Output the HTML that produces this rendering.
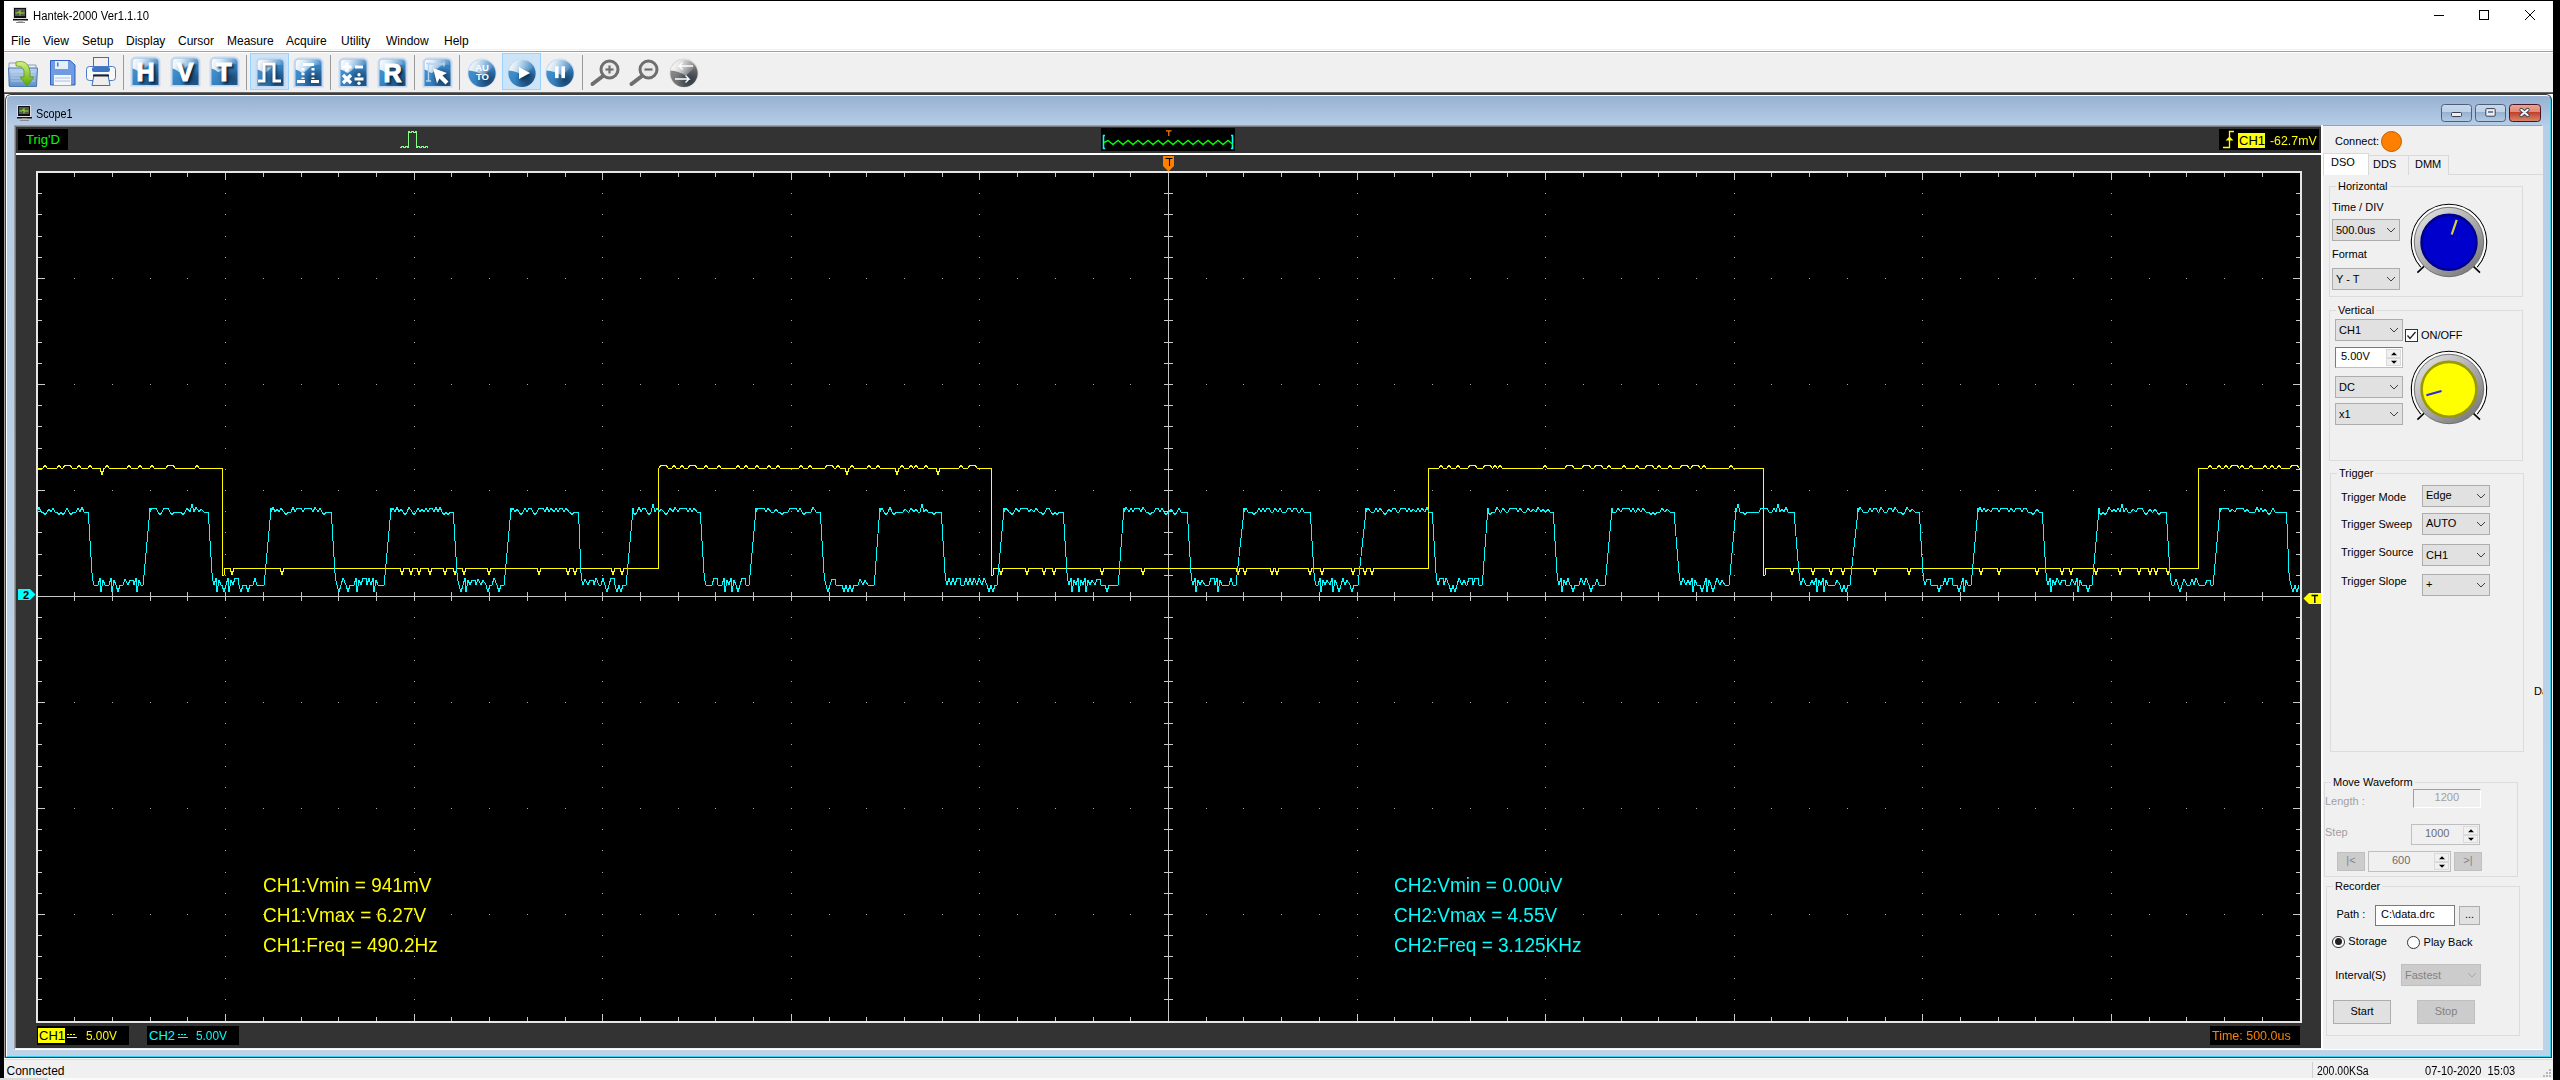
<!DOCTYPE html>
<html><head><meta charset="utf-8">
<style>
*{box-sizing:border-box}
html,body{margin:0;padding:0;width:2560px;height:1080px;overflow:hidden;background:#000;font-family:"Liberation Sans",sans-serif;}
.a{position:absolute}
.t{position:absolute;white-space:pre;line-height:1}
</style></head><body>
<!-- app frame -->
<div class="a" style="left:4px;top:1px;width:2549px;height:1079px;background:#fff"></div>
<!-- menu bar -->
<div class="a" style="left:4px;top:49px;width:2549px;height:1px;background:#f0f0f0"></div>
<div class="a" style="left:4px;top:51px;width:2549px;height:1px;background:#a0a0a0"></div>
<!-- toolbar -->
<div class="a" style="left:4px;top:53px;width:2549px;height:39px;background:#f0f0f0"></div>
<div class="a" style="left:4px;top:92px;width:2549px;height:1px;background:#6a6a6a"></div>
<div class="a" style="left:4px;top:93px;width:2549px;height:1px;background:#3c3c3c"></div>
<!-- MDI child window frame -->
<div class="a" style="left:4px;top:94px;width:1px;height:964px;background:#a0a0a0"></div>
<div class="a" style="left:5px;top:94px;width:2547px;height:964px;background:#3c3c3c;border-radius:6px 6px 0 0"></div>
<div class="a" style="left:6px;top:95px;width:2545px;height:962px;background:linear-gradient(#97b1d2,#b7cee8 30px,#bcd3ea);border-radius:5px 5px 0 0;border-left:1px solid #fff;border-top:1px solid #fff;border-right:1px solid #3ad0f0;border-bottom:1px solid #3ad0f0"></div>
<div class="a" style="left:14px;top:125px;width:2529px;height:925px;background:#f0f0f0;border-left:1px solid #a0a0a0;border-top:1px solid #a0a0a0;border-right:1px solid #fff;border-bottom:1px solid #fff"></div>
<!-- child title -->
<svg class="a" style="left:16px;top:104px" width="17" height="18">
<rect x="1.5" y="1.5" width="13" height="11" fill="#111" stroke="#ddd" stroke-width="1"/>
<rect x="3" y="3" width="10" height="7" fill="#555"/>
<path d="M3.5 7H6L7 5.5L8 7H12.5M8 4V9.5" stroke="#8fe030" stroke-width="1" fill="none"/>
<rect x="1" y="13" width="15" height="1.5" fill="#111"/>
<rect x="6" y="14.5" width="5" height="1.5" fill="#bbb"/>
<rect x="4" y="16" width="9" height="1" fill="#888"/>
</svg>
<div class="t" style="left:36px;top:108px;font-size:12px;color:#000;transform:scaleX(0.9);transform-origin:0 0">Scope1</div>
<svg class="a" style="left:2440px;top:103px" width="102" height="20">
<defs>
<linearGradient id="cbB" x1="0" y1="0" x2="0" y2="1"><stop offset="0" stop-color="#c9d9ec"/><stop offset="0.45" stop-color="#bcd0e8"/><stop offset="0.46" stop-color="#97b1d0"/><stop offset="1" stop-color="#b5cbe5"/></linearGradient>
<linearGradient id="cbR" x1="0" y1="0" x2="0" y2="1"><stop offset="0" stop-color="#eaa594"/><stop offset="0.45" stop-color="#df8a76"/><stop offset="0.46" stop-color="#c0402a"/><stop offset="1" stop-color="#d88a70"/></linearGradient>
</defs>
<rect x="1.5" y="1.5" width="30" height="17" rx="3" fill="url(#cbB)" stroke="#4f5f78" stroke-width="1"/>
<rect x="35.5" y="1.5" width="30" height="17" rx="3" fill="url(#cbB)" stroke="#4f5f78" stroke-width="1"/>
<rect x="69.5" y="1.5" width="31" height="17" rx="3" fill="url(#cbR)" stroke="#4a1424" stroke-width="1"/>
<rect x="11.5" y="9.5" width="10" height="4" rx="1" fill="#eee" stroke="#3a3f50" stroke-width="1"/>
<rect x="45.8" y="5.6" width="9.4" height="7.6" rx="1" fill="#eee" stroke="#3a3f50" stroke-width="1"/>
<rect x="48" y="8" width="5" height="2" fill="#6f86a8"/>
<path d="M81.3 6.8L87.7 12.2M87.7 6.8L81.3 12.2" stroke="#3a3f50" stroke-width="3.8" stroke-linecap="round"/>
<path d="M81.3 6.8L87.7 12.2M87.7 6.8L81.3 12.2" stroke="#f4f4f4" stroke-width="2.1" stroke-linecap="round"/>
</svg>
<!-- scope client dark -->
<div class="a" style="left:15px;top:126px;width:2306px;height:922px;background:#333"></div>
<div class="a" style="left:15px;top:126px;width:2306px;height:1px;background:#777"></div>
<div class="a" style="left:15px;top:126px;width:1px;height:922px;background:#777"></div>
<!-- right panel -->
<div class="a" style="left:2321px;top:125px;width:2px;height:924px;background:#fff"></div>
<div class="a" style="left:2323px;top:126px;width:220px;height:923px;background:#f0f0f0"></div>
<div class="t" style="left:2335px;top:135.7px;font-size:11px;color:#000;">Connect:</div>
<div class="a" style="left:2381px;top:131px;width:21px;height:21px;border-radius:50%;background:#ff8000;border:1px solid #b85c00"></div>
<div class="a" style="left:2323px;top:174px;width:220px;height:1px;background:#d9d9d9"></div>
<div class="a" style="left:2368px;top:155px;width:41px;height:20px;background:#f0f0f0;border:1px solid #d9d9d9;border-bottom:none"></div>
<div class="a" style="left:2408px;top:155px;width:41px;height:20px;background:#f0f0f0;border:1px solid #d9d9d9;border-bottom:none"></div>
<div class="a" style="left:2323px;top:153px;width:46px;height:22px;background:#fff;border:1px solid #d9d9d9;border-bottom:none"></div>
<div class="t" style="left:2331px;top:157.4px;font-size:11px;color:#000;">DSO</div>
<div class="t" style="left:2373px;top:159.4px;font-size:11px;color:#000;">DDS</div>
<div class="t" style="left:2415px;top:159.4px;font-size:11px;color:#000;">DMM</div>
<div class="a" style="left:2329px;top:186px;width:194px;height:111px;border:1px solid #dcdcdc"></div><div class="t" style="left:2336px;top:180.7px;font-size:11px;color:#000;background:#f0f0f0;padding:0 2px">Horizontal</div>
<div class="t" style="left:2332px;top:201.6px;font-size:11px;color:#000;">Time / DIV</div>
<div class="a" style="left:2332px;top:219px;width:68px;height:22px;background:#e1e1e1;border:1px solid #adadad"></div><div class="t" style="left:2336px;top:224.7px;font-size:11px;color:#000;">500.0us</div><svg class="a" style="left:2386px;top:227.0px" width="10" height="6"><path d="M1 1L5 5L9 1" fill="none" stroke="#404040" stroke-width="1"/></svg>
<div class="t" style="left:2332px;top:248.5px;font-size:11px;color:#000;">Format</div>
<div class="a" style="left:2332px;top:268px;width:68px;height:22px;background:#e1e1e1;border:1px solid #adadad"></div><div class="t" style="left:2336px;top:273.7px;font-size:11px;color:#000;">Y - T</div><svg class="a" style="left:2386px;top:276.0px" width="10" height="6"><path d="M1 1L5 5L9 1" fill="none" stroke="#404040" stroke-width="1"/></svg>
<svg class="a" style="left:2409px;top:202px" width="80" height="80"><defs><linearGradient id="kg242" x1="0.15" y1="0.1" x2="0.85" y2="0.9"><stop offset="0" stop-color="#dcdcdc"/><stop offset="1" stop-color="#7c7c7c"/></linearGradient></defs><path d="M11.81 65.03A37.7 37.7 0 1 1 68.19 65.03" fill="none" stroke="#000" stroke-width="1.1"/><path d="M12.85 64.10A36.3 36.3 0 1 1 67.15 64.10" fill="none" stroke="#fff" stroke-width="1.4"/><path d="M8.4 70.6L15.0 64.4M71.0 70.6L64.4 64.4" stroke="#000" stroke-width="1.6"/><circle cx="40" cy="40" r="34.7" fill="url(#kg242)" stroke="#666" stroke-width="0.9"/><circle cx="40" cy="40.3" r="27.4" fill="#0000cc" stroke="#00008c" stroke-width="2.6"/><path d="M47.7 17.8L42.7 32.5" stroke="#d8d040" stroke-width="2.2"/></svg>
<div class="a" style="left:2329px;top:310px;width:194px;height:151px;border:1px solid #dcdcdc"></div><div class="t" style="left:2336px;top:304.7px;font-size:11px;color:#000;background:#f0f0f0;padding:0 2px">Vertical</div>
<div class="a" style="left:2335px;top:319px;width:68px;height:22px;background:#e1e1e1;border:1px solid #adadad"></div><div class="t" style="left:2339px;top:324.6px;font-size:11px;color:#000;">CH1</div><svg class="a" style="left:2389px;top:327.0px" width="10" height="6"><path d="M1 1L5 5L9 1" fill="none" stroke="#404040" stroke-width="1"/></svg>
<div class="a" style="left:2405px;top:329px;width:13px;height:13px;background:#fff;border:1px solid #333"></div>
<svg class="a" style="left:2405px;top:329px" width="13" height="13"><path d="M2.5 6.5L5 9.5L10.5 3" fill="none" stroke="#222" stroke-width="1.3"/></svg>
<div class="t" style="left:2421px;top:330.3px;font-size:11px;color:#000;">ON/OFF</div>
<div class="a" style="left:2335px;top:347px;width:68px;height:21px;background:#fff;border:1px solid #7a7a7a;border-right-color:#bfbfbf;border-bottom-color:#bfbfbf"></div><div class="t" style="left:2341px;top:351.3px;font-size:11px;color:#000;">5.00V</div><div class="a" style="left:2386px;top:349px;width:15px;height:8.5px;background:#f0f0f0;border:1px solid #dadada"></div><div class="a" style="left:2386px;top:357.5px;width:15px;height:8.5px;background:#f0f0f0;border:1px solid #dadada"></div><svg class="a" style="left:2389.5px;top:349px" width="8" height="17"><path d="M1 6.2L4 3.2L7 6.2z M1 11.8L4 14.8L7 11.8z" fill="#000"/></svg>
<div class="a" style="left:2335px;top:376px;width:68px;height:22px;background:#e1e1e1;border:1px solid #adadad"></div><div class="t" style="left:2339px;top:381.7px;font-size:11px;color:#000;">DC</div><svg class="a" style="left:2389px;top:384.0px" width="10" height="6"><path d="M1 1L5 5L9 1" fill="none" stroke="#404040" stroke-width="1"/></svg>
<div class="a" style="left:2335px;top:403px;width:68px;height:22px;background:#e1e1e1;border:1px solid #adadad"></div><div class="t" style="left:2339px;top:408.7px;font-size:11px;color:#000;">x1</div><svg class="a" style="left:2389px;top:411.0px" width="10" height="6"><path d="M1 1L5 5L9 1" fill="none" stroke="#404040" stroke-width="1"/></svg>
<svg class="a" style="left:2409px;top:349px" width="80" height="80"><defs><linearGradient id="kg389" x1="0.15" y1="0.1" x2="0.85" y2="0.9"><stop offset="0" stop-color="#dcdcdc"/><stop offset="1" stop-color="#7c7c7c"/></linearGradient></defs><path d="M11.81 65.03A37.7 37.7 0 1 1 68.19 65.03" fill="none" stroke="#000" stroke-width="1.1"/><path d="M12.85 64.10A36.3 36.3 0 1 1 67.15 64.10" fill="none" stroke="#fff" stroke-width="1.4"/><path d="M8.4 70.6L15.0 64.4M71.0 70.6L64.4 64.4" stroke="#000" stroke-width="1.6"/><circle cx="40" cy="40" r="34.7" fill="url(#kg389)" stroke="#666" stroke-width="0.9"/><circle cx="40" cy="40.3" r="27.4" fill="#ffff00" stroke="#9a9a00" stroke-width="2.6"/><path d="M17.4 46.2L32.5 42.0" stroke="#2a2ae0" stroke-width="2.2"/></svg>
<div class="a" style="left:2330px;top:473px;width:194px;height:279px;border:1px solid #dcdcdc"></div><div class="t" style="left:2337px;top:467.6px;font-size:11px;color:#000;background:#f0f0f0;padding:0 2px">Trigger</div>
<div class="t" style="left:2341px;top:491.6px;font-size:11px;color:#000;">Trigger Mode</div>
<div class="a" style="left:2422px;top:485px;width:68px;height:22px;background:#e1e1e1;border:1px solid #adadad"></div><div class="t" style="left:2426px;top:490.3px;font-size:11px;color:#000;">Edge</div><svg class="a" style="left:2476px;top:493.0px" width="10" height="6"><path d="M1 1L5 5L9 1" fill="none" stroke="#404040" stroke-width="1"/></svg>
<div class="t" style="left:2341px;top:519.4px;font-size:11px;color:#000;">Trigger Sweep</div>
<div class="a" style="left:2422px;top:513px;width:68px;height:22px;background:#e1e1e1;border:1px solid #adadad"></div><div class="t" style="left:2426px;top:518.1px;font-size:11px;color:#000;">AUTO</div><svg class="a" style="left:2476px;top:521.0px" width="10" height="6"><path d="M1 1L5 5L9 1" fill="none" stroke="#404040" stroke-width="1"/></svg>
<div class="t" style="left:2341px;top:547.3px;font-size:11px;color:#000;">Trigger Source</div>
<div class="a" style="left:2422px;top:544px;width:68px;height:22px;background:#e1e1e1;border:1px solid #adadad"></div><div class="t" style="left:2426px;top:549.9px;font-size:11px;color:#000;">CH1</div><svg class="a" style="left:2476px;top:552.0px" width="10" height="6"><path d="M1 1L5 5L9 1" fill="none" stroke="#404040" stroke-width="1"/></svg>
<div class="t" style="left:2341px;top:575.9px;font-size:11px;color:#000;">Trigger Slope</div>
<div class="a" style="left:2422px;top:574px;width:68px;height:22px;background:#e1e1e1;border:1px solid #adadad"></div><div class="t" style="left:2426px;top:579.1px;font-size:11px;color:#000;">+</div><svg class="a" style="left:2476px;top:582.0px" width="10" height="6"><path d="M1 1L5 5L9 1" fill="none" stroke="#404040" stroke-width="1"/></svg>
<div class="a" style="left:2530px;top:680px;width:13px;height:20px;overflow:hidden"><div class="t" style="left:4px;top:5.5px;font-size:11px;color:#000;">Da</div></div>
<div class="a" style="left:2324px;top:782px;width:194px;height:95px;border:1px solid #dcdcdc"></div><div class="t" style="left:2331px;top:776.5px;font-size:11px;color:#000;background:#f0f0f0;padding:0 2px">Move Waveform</div>
<div class="t" style="left:2325px;top:796.3px;font-size:11px;color:#a0a0a0;">Length :</div>
<div class="a" style="left:2413px;top:789px;width:68px;height:19px;background:#f0f0f0;border:1px solid #a0a0a0;border-right-color:#fff;border-bottom-color:#fff"></div>
<div class="t" style="left:2434.6px;top:792.3px;font-size:11px;color:#a0a0a0;">1200</div>
<div class="t" style="left:2325px;top:827.1px;font-size:11px;color:#a0a0a0;">Step</div>
<div class="a" style="left:2411px;top:824px;width:69px;height:21px;background:#f0f0f0;border:1px solid #bfbfbf;border-right-color:#bfbfbf;border-bottom-color:#bfbfbf"></div><div class="t" style="left:2425px;top:827.9px;font-size:11px;color:#6d6d6d;">1000</div><div class="a" style="left:2463px;top:826px;width:15px;height:8.5px;background:#f0f0f0;border:1px solid #dadada"></div><div class="a" style="left:2463px;top:834.5px;width:15px;height:8.5px;background:#f0f0f0;border:1px solid #dadada"></div><svg class="a" style="left:2466.5px;top:826px" width="8" height="17"><path d="M1 6.2L4 3.2L7 6.2z M1 11.8L4 14.8L7 11.8z" fill="#000"/></svg>
<div class="a" style="left:2337px;top:852px;width:28px;height:19px;background:#cccccc;border:1px solid #bfbfbf"></div><div class="t" style="left:2337px;top:854.9px;width:28px;text-align:center;font-size:11px;color:#838383">|&lt;</div>
<div class="a" style="left:2368px;top:851px;width:83px;height:21px;background:#f0f0f0;border:1px solid #bfbfbf;border-right-color:#bfbfbf;border-bottom-color:#bfbfbf"></div><div class="t" style="left:2392px;top:854.9px;font-size:11px;color:#6d6d6d;">600</div><div class="a" style="left:2434px;top:853px;width:15px;height:8.5px;background:#f0f0f0;border:1px solid #dadada"></div><div class="a" style="left:2434px;top:861.5px;width:15px;height:8.5px;background:#f0f0f0;border:1px solid #dadada"></div><svg class="a" style="left:2437.5px;top:853px" width="8" height="17"><path d="M1 6.2L4 3.2L7 6.2z M1 11.8L4 14.8L7 11.8z" fill="#000"/></svg>
<div class="a" style="left:2454px;top:852px;width:28px;height:19px;background:#cccccc;border:1px solid #bfbfbf"></div><div class="t" style="left:2454px;top:854.9px;width:28px;text-align:center;font-size:11px;color:#838383">&gt;|</div>
<div class="a" style="left:2326px;top:886px;width:194px;height:150px;border:1px solid #dcdcdc"></div><div class="t" style="left:2333px;top:880.5px;font-size:11px;color:#000;background:#f0f0f0;padding:0 2px">Recorder</div>
<div class="t" style="left:2336.5px;top:908.5px;font-size:11px;color:#000;">Path :</div>
<div class="a" style="left:2375px;top:905px;width:80px;height:21px;background:#fff;border:1px solid #7a7a7a"></div>
<div class="t" style="left:2381px;top:909.2px;font-size:11px;color:#000;">C:\data.drc</div>
<div class="a" style="left:2459px;top:906px;width:21px;height:19px;background:#e1e1e1;border:1px solid #adadad"></div><div class="t" style="left:2459px;top:909.2px;width:21px;text-align:center;font-size:11px;color:#000">...</div>
<div class="a" style="left:2332px;top:935.5px;width:12.5px;height:12.5px;border-radius:50%;background:#fff;border:1px solid #333"></div>
<div class="a" style="left:2334.7px;top:938.3px;width:7px;height:7px;border-radius:50%;background:#222"></div>
<div class="t" style="left:2348.3px;top:936.3px;font-size:11px;color:#000;">Storage</div>
<div class="a" style="left:2406.8px;top:936.3px;width:12.8px;height:12.8px;border-radius:50%;background:#fff;border:1px solid #333"></div>
<div class="t" style="left:2423.6px;top:937.2px;font-size:11px;color:#000;">Play Back</div>
<div class="t" style="left:2335.3px;top:969.6px;font-size:11px;color:#000;">Interval(S)</div>
<div class="a" style="left:2401px;top:964px;width:80px;height:22px;background:#cccccc;border:1px solid #bfbfbf"></div><div class="t" style="left:2405px;top:969.7px;font-size:11px;color:#838383;">Fastest</div><svg class="a" style="left:2467px;top:972.0px" width="10" height="6"><path d="M1 1L5 5L9 1" fill="none" stroke="#a8a8a8" stroke-width="1"/></svg>
<div class="a" style="left:2333px;top:1000px;width:58px;height:24px;background:#e1e1e1;border:1px solid #adadad"></div><div class="t" style="left:2333px;top:1006.3px;width:58px;text-align:center;font-size:11px;color:#000">Start</div>
<div class="a" style="left:2417px;top:1000px;width:58px;height:24px;background:#cccccc;border:1px solid #bfbfbf"></div><div class="t" style="left:2417px;top:1006.3px;width:58px;text-align:center;font-size:11px;color:#838383">Stop</div>
<!-- status bar -->
<div class="a" style="left:4px;top:1058px;width:2549px;height:22px;background:#f0f0f0;border-top:1px solid #fff"></div>
<div class="a" style="left:4px;top:1059px;width:2549px;height:1px;background:#dcdcdc"></div>
<div class="a" style="left:0px;top:1078px;width:48px;height:2px;background:#dadada"></div>
<div class="a" style="left:48px;top:1078px;width:2505px;height:2px;background:#fbfbfb"></div>
<div class="t" style="left:6.5px;top:1064.5px;font-size:12px;color:#000">Connected</div>
<div class="a" style="left:2312px;top:1062px;width:1px;height:16px;background:#d0d0d0"></div>
<div class="t" style="left:2317px;top:1064.5px;font-size:12px;color:#000;transform:scaleX(0.87);transform-origin:0 0">200.00KSa</div>
<div class="t" style="left:2425px;top:1064.5px;font-size:12px;color:#000;transform:scaleX(0.92);transform-origin:0 0">07-10-2020  15:03</div>
<svg class="a" style="left:2541px;top:1068px" width="12" height="12" shape-rendering="crispEdges"><path d="M8 1h2v2h-2zM5 4h2v2h-2zM8 4h2v2h-2zM2 7h2v2h-2zM5 7h2v2h-2zM8 7h2v2h-2z" fill="#b8b8b8"/></svg>

<!-- title icon -->
<svg class="a" style="left:12px;top:6px" width="17" height="18">
<rect x="1.5" y="1.5" width="13" height="11" fill="#111" stroke="#ddd" stroke-width="1"/>
<rect x="3" y="3" width="10" height="7" fill="#555"/>
<path d="M3.5 7H6L7 5.5L8 7H12.5M8 4V9.5" stroke="#8fe030" stroke-width="1" fill="none"/>
<rect x="1" y="13" width="15" height="1.5" fill="#111"/>
<rect x="6" y="14.5" width="5" height="1.5" fill="#bbb"/>
<rect x="4" y="16" width="9" height="1" fill="#888"/>
</svg>
<div class="t" style="left:33px;top:10px;font-size:12px;color:#000;transform:scaleX(0.94);transform-origin:0 0">Hantek-2000 Ver1.1.10</div>
<!-- window controls -->
<div class="a" style="left:2434px;top:15px;width:10px;height:1px;background:#000"></div>
<div class="a" style="left:2479px;top:10px;width:10px;height:10px;border:1px solid #000"></div>
<svg class="a" style="left:2524px;top:9px" width="12" height="12"><path d="M1 1L11 11M11 1L1 11" stroke="#000" stroke-width="1"/></svg>
<!-- menu -->
<div class="t" style="left:11px;top:35px;font-size:12px;color:#000">File</div>
<div class="t" style="left:43px;top:35px;font-size:12px;color:#000">View</div>
<div class="t" style="left:82px;top:35px;font-size:12px;color:#000">Setup</div>
<div class="t" style="left:126px;top:35px;font-size:12px;color:#000">Display</div>
<div class="t" style="left:178px;top:35px;font-size:12px;color:#000">Cursor</div>
<div class="t" style="left:227px;top:35px;font-size:12px;color:#000">Measure</div>
<div class="t" style="left:286px;top:35px;font-size:12px;color:#000">Acquire</div>
<div class="t" style="left:341px;top:35px;font-size:12px;color:#000">Utility</div>
<div class="t" style="left:386px;top:35px;font-size:12px;color:#000">Window</div>
<div class="t" style="left:444px;top:35px;font-size:12px;color:#000">Help</div>
<svg class="a" style="left:0;top:52px" width="720" height="41"><defs>
<filter id="fsh" x="-30%" y="-30%" width="160%" height="160%"><feGaussianBlur stdDeviation="1.3"/></filter>
<linearGradient id="gBlue" x1="0" y1="0" x2="1" y2="1"><stop offset="0" stop-color="#4a9ad6"/><stop offset="0.6" stop-color="#3580bf"/><stop offset="1" stop-color="#1f5a8f"/></linearGradient>
<radialGradient id="gShade" cx="0.68" cy="0.72" r="0.45"><stop offset="0" stop-color="#051a33" stop-opacity="0.55"/><stop offset="1" stop-color="#051a33" stop-opacity="0"/></radialGradient>
<linearGradient id="gGray" x1="0" y1="0" x2="1" y2="1"><stop offset="0" stop-color="#9a9a9a"/><stop offset="0.6" stop-color="#6e6e6e"/><stop offset="1" stop-color="#4a4a4a"/></linearGradient>
<linearGradient id="gGloss" x1="0" y1="0" x2="1" y2="0.2"><stop offset="0" stop-color="#fff" stop-opacity="1"/><stop offset="0.35" stop-color="#fff" stop-opacity="0.8"/><stop offset="1" stop-color="#fff" stop-opacity="0.1"/></linearGradient>
<linearGradient id="gFolder" x1="0" y1="0" x2="0" y2="1"><stop offset="0" stop-color="#bcd4ee"/><stop offset="1" stop-color="#5d8fc8"/></linearGradient>
<linearGradient id="gArrow" x1="0" y1="0" x2="0" y2="1"><stop offset="0" stop-color="#d8f08a"/><stop offset="1" stop-color="#5aa800"/></linearGradient>
</defs><rect x="123" y="3" width="1" height="35" fill="#9a9a9a"/><rect x="246" y="3" width="1" height="35" fill="#9a9a9a"/><rect x="330" y="3" width="1" height="35" fill="#9a9a9a"/><rect x="414" y="3" width="1" height="35" fill="#9a9a9a"/><rect x="459" y="3" width="1" height="35" fill="#9a9a9a"/><rect x="582" y="3" width="1" height="35" fill="#9a9a9a"/><rect x="250.5" y="1.5" width="38" height="36" fill="#cce4f7" stroke="#99d1ff" stroke-width="1"/><rect x="502.5" y="1.5" width="38" height="36" fill="#cce4f7" stroke="#99d1ff" stroke-width="1"/><g transform="translate(8,7)"><path d="M1 4H11L13 6H28V27H1z" fill="#e8eef5" stroke="#8aa0b8" stroke-width="1"/><path d="M0.5 9H29.5L28.5 27.5H1.5z" fill="url(#gFolder)" stroke="#4a78b0" stroke-width="1"/><path d="M3 13H27M3 16H27M3 19H27M3 22H27" stroke="#dbe7f5" stroke-width="0.8" opacity="0.6"/><path d="M8 3Q20 0 22 12V18H26L19 27L12 18H16V12Q15 7 8 7z" fill="url(#gArrow)" stroke="#5a9a10" stroke-width="0.8"/></g><g transform="translate(50,8)"><path d="M0.5 0.5H20L25 5V25H0.5z" fill="#6f9ce0" stroke="#2f5fc0" stroke-width="1"/><rect x="5" y="1" width="13" height="8" fill="#e6eefa"/><rect x="7" y="2.5" width="1.5" height="4" fill="#4a78c0"/><rect x="4" y="15" width="17" height="10" fill="#f4f6fb"/><path d="M5 18H20M5 21H20" stroke="#a9c0e8" stroke-width="1"/></g><g transform="translate(86,5)"><rect x="7.5" y="0.5" width="15" height="10" fill="#f4f0ef" stroke="#3a6fc0" stroke-width="1"/><rect x="0.5" y="9.5" width="29" height="14" rx="3" fill="#f8f8f8" stroke="#4a7ac8" stroke-width="1"/><rect x="6" y="10" width="18" height="5" rx="2" fill="#3f74c4"/><path d="M6 28.5L8 18H22L24 28.5z" fill="#f0eded" stroke="#3a6fc0" stroke-width="1"/><rect x="7" y="17.5" width="16" height="2" fill="#222"/></g><g transform="translate(130,4)"><path d="M0.5 30.5V6A5.5 5.5 0 0 1 6 0.5H25A5.5 5.5 0 0 1 30.5 6V30.5z" fill="#c6d7ee"/><path d="M2.5 29V6.5A4 4 0 0 1 6.5 2.5H24.5A4 4 0 0 1 28.5 6.5V29z" fill="url(#gBlue)"/><path d="M2.5 29V6.5A4 4 0 0 1 6.5 2.5H24.5A4 4 0 0 1 28.5 6.5V29z" fill="url(#gShade)"/><path d="M2.5 12.5V6.5A4 4 0 0 1 6.5 2.5H24.5A4 4 0 0 1 28.5 6.5V8Q20 7 15 12Q11 16 9 16Q6 13 2.5 12.5z" fill="url(#gGloss)"/><text x="17.5" y="27" font-family="Liberation Sans" font-weight="bold" font-size="25" fill="#06223d" fill-opacity="0.85" stroke="#06223d" stroke-width="1.2" text-anchor="middle" filter="url(#fsh)">H</text><text x="15.5" y="25" font-family="Liberation Sans" font-weight="bold" font-size="25" fill="#fff" stroke="#fff" stroke-width="1.1" text-anchor="middle">H</text></g><g transform="translate(170,4)"><path d="M0.5 30.5V6A5.5 5.5 0 0 1 6 0.5H25A5.5 5.5 0 0 1 30.5 6V30.5z" fill="#c6d7ee"/><path d="M2.5 29V6.5A4 4 0 0 1 6.5 2.5H24.5A4 4 0 0 1 28.5 6.5V29z" fill="url(#gBlue)"/><path d="M2.5 29V6.5A4 4 0 0 1 6.5 2.5H24.5A4 4 0 0 1 28.5 6.5V29z" fill="url(#gShade)"/><path d="M2.5 12.5V6.5A4 4 0 0 1 6.5 2.5H24.5A4 4 0 0 1 28.5 6.5V8Q20 7 15 12Q11 16 9 16Q6 13 2.5 12.5z" fill="url(#gGloss)"/><text x="17" y="27" font-family="Liberation Sans" font-weight="bold" font-size="25" fill="#06223d" fill-opacity="0.85" stroke="#06223d" stroke-width="1.2" text-anchor="middle" filter="url(#fsh)">V</text><text x="15" y="25" font-family="Liberation Sans" font-weight="bold" font-size="25" fill="#fff" stroke="#fff" stroke-width="1.1" text-anchor="middle">V</text></g><g transform="translate(209,4)"><path d="M0.5 30.5V6A5.5 5.5 0 0 1 6 0.5H25A5.5 5.5 0 0 1 30.5 6V30.5z" fill="#c6d7ee"/><path d="M2.5 29V6.5A4 4 0 0 1 6.5 2.5H24.5A4 4 0 0 1 28.5 6.5V29z" fill="url(#gBlue)"/><path d="M2.5 29V6.5A4 4 0 0 1 6.5 2.5H24.5A4 4 0 0 1 28.5 6.5V29z" fill="url(#gShade)"/><path d="M2.5 12.5V6.5A4 4 0 0 1 6.5 2.5H24.5A4 4 0 0 1 28.5 6.5V8Q20 7 15 12Q11 16 9 16Q6 13 2.5 12.5z" fill="url(#gGloss)"/><text x="17" y="27" font-family="Liberation Sans" font-weight="bold" font-size="25" fill="#06223d" fill-opacity="0.85" stroke="#06223d" stroke-width="1.2" text-anchor="middle" filter="url(#fsh)">T</text><text x="15" y="25" font-family="Liberation Sans" font-weight="bold" font-size="25" fill="#fff" stroke="#fff" stroke-width="1.1" text-anchor="middle">T</text></g><g transform="translate(255,5)"><path d="M0.5 30.5V6A5.5 5.5 0 0 1 6 0.5H25A5.5 5.5 0 0 1 30.5 6V30.5z" fill="#c6d7ee"/><path d="M2.5 29V6.5A4 4 0 0 1 6.5 2.5H24.5A4 4 0 0 1 28.5 6.5V29z" fill="url(#gBlue)"/><path d="M2.5 29V6.5A4 4 0 0 1 6.5 2.5H24.5A4 4 0 0 1 28.5 6.5V29z" fill="url(#gShade)"/><path d="M2.5 12.5V6.5A4 4 0 0 1 6.5 2.5H24.5A4 4 0 0 1 28.5 6.5V8Q20 7 15 12Q11 16 9 16Q6 13 2.5 12.5z" fill="url(#gGloss)"/><path d="M4 25H10V8H20V25H27" fill="none" stroke="#06223d" stroke-opacity="0.7" stroke-width="3" filter="url(#fsh)"/><path d="M3 24H9V7H19V24H26" fill="none" stroke="#fff" stroke-width="3"/></g><g transform="translate(293,5)"><path d="M0.5 30.5V6A5.5 5.5 0 0 1 6 0.5H25A5.5 5.5 0 0 1 30.5 6V30.5z" fill="#c6d7ee"/><path d="M2.5 29V6.5A4 4 0 0 1 6.5 2.5H24.5A4 4 0 0 1 28.5 6.5V29z" fill="url(#gBlue)"/><path d="M2.5 29V6.5A4 4 0 0 1 6.5 2.5H24.5A4 4 0 0 1 28.5 6.5V29z" fill="url(#gShade)"/><path d="M2.5 12.5V6.5A4 4 0 0 1 6.5 2.5H24.5A4 4 0 0 1 28.5 6.5V8Q20 7 15 12Q11 16 9 16Q6 13 2.5 12.5z" fill="url(#gGloss)"/><path d="M4 24.5H12M18 24.5H26M10 7.5H21" stroke="#fff" stroke-width="3"/><path d="M10 11V22M20 11V22" stroke="#fff" stroke-width="3" stroke-dasharray="2.4 2.4"/></g><g transform="translate(338,5)"><path d="M0.5 30.5V6A5.5 5.5 0 0 1 6 0.5H25A5.5 5.5 0 0 1 30.5 6V30.5z" fill="#c6d7ee"/><path d="M2.5 29V6.5A4 4 0 0 1 6.5 2.5H24.5A4 4 0 0 1 28.5 6.5V29z" fill="url(#gBlue)"/><path d="M2.5 29V6.5A4 4 0 0 1 6.5 2.5H24.5A4 4 0 0 1 28.5 6.5V29z" fill="url(#gShade)"/><path d="M2.5 12.5V6.5A4 4 0 0 1 6.5 2.5H24.5A4 4 0 0 1 28.5 6.5V8Q20 7 15 12Q11 16 9 16Q6 13 2.5 12.5z" fill="url(#gGloss)"/><path d="M4.5 10H13.5M9 5.5V14.5M17 10H25M5 18L13 26M13 18L5 26M16.5 22H25.5" stroke="#fff" stroke-width="3.2"/><circle cx="21" cy="17.8" r="1.7" fill="#fff"/><circle cx="21" cy="26.2" r="1.7" fill="#fff"/></g><g transform="translate(377,5)"><path d="M0.5 30.5V6A5.5 5.5 0 0 1 6 0.5H25A5.5 5.5 0 0 1 30.5 6V30.5z" fill="#c6d7ee"/><path d="M2.5 29V6.5A4 4 0 0 1 6.5 2.5H24.5A4 4 0 0 1 28.5 6.5V29z" fill="url(#gBlue)"/><path d="M2.5 29V6.5A4 4 0 0 1 6.5 2.5H24.5A4 4 0 0 1 28.5 6.5V29z" fill="url(#gShade)"/><path d="M2.5 12.5V6.5A4 4 0 0 1 6.5 2.5H24.5A4 4 0 0 1 28.5 6.5V8Q20 7 15 12Q11 16 9 16Q6 13 2.5 12.5z" fill="url(#gGloss)"/><text x="17.5" y="27" font-family="Liberation Sans" font-weight="bold" font-size="25" fill="#06223d" fill-opacity="0.85" stroke="#06223d" stroke-width="1.2" text-anchor="middle" filter="url(#fsh)">R</text><text x="15.5" y="25" font-family="Liberation Sans" font-weight="bold" font-size="25" fill="#fff" stroke="#fff" stroke-width="1.1" text-anchor="middle">R</text></g><g transform="translate(422,5)"><path d="M0.5 30.5V6A5.5 5.5 0 0 1 6 0.5H25A5.5 5.5 0 0 1 30.5 6V30.5z" fill="#c6d7ee"/><path d="M2.5 29V6.5A4 4 0 0 1 6.5 2.5H24.5A4 4 0 0 1 28.5 6.5V29z" fill="url(#gBlue)"/><path d="M2.5 29V6.5A4 4 0 0 1 6.5 2.5H24.5A4 4 0 0 1 28.5 6.5V29z" fill="url(#gShade)"/><path d="M2.5 12.5V6.5A4 4 0 0 1 6.5 2.5H24.5A4 4 0 0 1 28.5 6.5V8Q20 7 15 12Q11 16 9 16Q6 13 2.5 12.5z" fill="url(#gGloss)"/><path d="M6.5 6V24M4 6.5H9M4 24H9M6.5 7H22M22 4.5V9.5" stroke="#b8d4ee" stroke-width="1.4" fill="none"/><path d="M11.5 11.5L26 16.5L21 19L27 25L24 28L18.5 22L15.5 27z" fill="#06223d" fill-opacity="0.5" filter="url(#fsh)"/><path d="M11 11L25 16L20.5 18.5L26.5 24.5L23.5 27.5L17.5 21.5L15 26.5z" fill="#fff"/></g><g transform="translate(467,6)"><circle cx="15" cy="15" r="14.5" fill="#c9d9ee"/><circle cx="15" cy="15.3" r="13.6" fill="url(#gBlue)"/><circle cx="15" cy="15.3" r="13.6" fill="url(#gShade)"/><path d="M1.6 12.5 A13.6 13.6 0 0 1 27 8.5 L17 17.5 Q9 13 1.6 12.5z" fill="url(#gGloss)"/><text x="15" y="12.8" font-family="Liberation Sans" font-weight="bold" font-size="9.5" fill="#fff" text-anchor="middle">AU</text><text x="15.5" y="22.2" font-family="Liberation Sans" font-weight="bold" font-size="9.5" fill="#fff" text-anchor="middle">TO</text></g><g transform="translate(507,6)"><circle cx="15" cy="15" r="14.5" fill="#c9d9ee"/><circle cx="15" cy="15.3" r="13.6" fill="url(#gBlue)"/><circle cx="15" cy="15.3" r="13.6" fill="url(#gShade)"/><path d="M1.6 12.5 A13.6 13.6 0 0 1 27 8.5 L17 17.5 Q9 13 1.6 12.5z" fill="url(#gGloss)"/><path d="M13.5 11L25 17L13.5 23z" fill="#06223d" fill-opacity="0.6" filter="url(#fsh)"/><path d="M12 9L23 15L12 21z" fill="#fff"/></g><g transform="translate(545,6)"><circle cx="15" cy="15" r="14.5" fill="#c9d9ee"/><circle cx="15" cy="15.3" r="13.6" fill="url(#gBlue)"/><circle cx="15" cy="15.3" r="13.6" fill="url(#gShade)"/><path d="M1.6 12.5 A13.6 13.6 0 0 1 27 8.5 L17 17.5 Q9 13 1.6 12.5z" fill="url(#gGloss)"/><rect x="10" y="8.3" width="3.6" height="11.8" fill="#fff"/><rect x="16.4" y="8.3" width="3.6" height="11.8" fill="#fff"/></g><g transform="translate(590,7)"><circle cx="19.5" cy="10.5" r="8.5" fill="#eaeaea" stroke="#6e6e6e" stroke-width="3"/><path d="M13 17L2.5 25" stroke="#6e6e6e" stroke-width="4" stroke-linecap="round"/><path d="M15.5 10.5H23.5" stroke="#6e6e6e" stroke-width="2.2"/><path d="M19.5 6.5V14.5" stroke="#6e6e6e" stroke-width="2.2"/></g><g transform="translate(629,7)"><circle cx="19.5" cy="10.5" r="8.5" fill="#eaeaea" stroke="#6e6e6e" stroke-width="3"/><path d="M13 17L2.5 25" stroke="#6e6e6e" stroke-width="4" stroke-linecap="round"/><path d="M15.5 10.5H23.5" stroke="#6e6e6e" stroke-width="2.2"/></g><g transform="translate(669,6)"><circle cx="15" cy="15" r="14.5" fill="#d6d6d6"/><circle cx="15" cy="15.3" r="13.6" fill="url(#gGray)"/><circle cx="15" cy="15.3" r="13.6" fill="url(#gShade)"/><path d="M1.6 12.5 A13.6 13.6 0 0 1 27 8.5 L17 17.5 Q9 13 1.6 12.5z" fill="url(#gGloss)"/><path d="M24 8H10L13.5 4.5M10 8L13.5 11.5M6 21H20L16.5 17.5M20 21L16.5 24.5" stroke="#fff" stroke-width="1.4" fill="none"/></g></svg>

<!-- plot -->
<svg class="a" style="left:0;top:0" width="2560" height="1080" shape-rendering="crispEdges">
<rect x="37" y="172" width="2264" height="850" fill="#000"/>
<path d="M74 278h1v1h-1zM112 278h1v1h-1zM150 278h1v1h-1zM187 278h1v1h-1zM225 278h1v1h-1zM263 278h1v1h-1zM301 278h1v1h-1zM338 278h1v1h-1zM376 278h1v1h-1zM414 278h1v1h-1zM451 278h1v1h-1zM489 278h1v1h-1zM527 278h1v1h-1zM565 278h1v1h-1zM602 278h1v1h-1zM640 278h1v1h-1zM678 278h1v1h-1zM715 278h1v1h-1zM753 278h1v1h-1zM791 278h1v1h-1zM829 278h1v1h-1zM866 278h1v1h-1zM904 278h1v1h-1zM942 278h1v1h-1zM979 278h1v1h-1zM1017 278h1v1h-1zM1055 278h1v1h-1zM1093 278h1v1h-1zM1130 278h1v1h-1zM1168 278h1v1h-1zM1206 278h1v1h-1zM1243 278h1v1h-1zM1281 278h1v1h-1zM1319 278h1v1h-1zM1357 278h1v1h-1zM1394 278h1v1h-1zM1432 278h1v1h-1zM1470 278h1v1h-1zM1507 278h1v1h-1zM1545 278h1v1h-1zM1583 278h1v1h-1zM1621 278h1v1h-1zM1658 278h1v1h-1zM1696 278h1v1h-1zM1734 278h1v1h-1zM1771 278h1v1h-1zM1809 278h1v1h-1zM1847 278h1v1h-1zM1885 278h1v1h-1zM1922 278h1v1h-1zM1960 278h1v1h-1zM1998 278h1v1h-1zM2035 278h1v1h-1zM2073 278h1v1h-1zM2111 278h1v1h-1zM2149 278h1v1h-1zM2186 278h1v1h-1zM2224 278h1v1h-1zM2262 278h1v1h-1zM74 384h1v1h-1zM112 384h1v1h-1zM150 384h1v1h-1zM187 384h1v1h-1zM225 384h1v1h-1zM263 384h1v1h-1zM301 384h1v1h-1zM338 384h1v1h-1zM376 384h1v1h-1zM414 384h1v1h-1zM451 384h1v1h-1zM489 384h1v1h-1zM527 384h1v1h-1zM565 384h1v1h-1zM602 384h1v1h-1zM640 384h1v1h-1zM678 384h1v1h-1zM715 384h1v1h-1zM753 384h1v1h-1zM791 384h1v1h-1zM829 384h1v1h-1zM866 384h1v1h-1zM904 384h1v1h-1zM942 384h1v1h-1zM979 384h1v1h-1zM1017 384h1v1h-1zM1055 384h1v1h-1zM1093 384h1v1h-1zM1130 384h1v1h-1zM1168 384h1v1h-1zM1206 384h1v1h-1zM1243 384h1v1h-1zM1281 384h1v1h-1zM1319 384h1v1h-1zM1357 384h1v1h-1zM1394 384h1v1h-1zM1432 384h1v1h-1zM1470 384h1v1h-1zM1507 384h1v1h-1zM1545 384h1v1h-1zM1583 384h1v1h-1zM1621 384h1v1h-1zM1658 384h1v1h-1zM1696 384h1v1h-1zM1734 384h1v1h-1zM1771 384h1v1h-1zM1809 384h1v1h-1zM1847 384h1v1h-1zM1885 384h1v1h-1zM1922 384h1v1h-1zM1960 384h1v1h-1zM1998 384h1v1h-1zM2035 384h1v1h-1zM2073 384h1v1h-1zM2111 384h1v1h-1zM2149 384h1v1h-1zM2186 384h1v1h-1zM2224 384h1v1h-1zM2262 384h1v1h-1zM74 490h1v1h-1zM112 490h1v1h-1zM150 490h1v1h-1zM187 490h1v1h-1zM225 490h1v1h-1zM263 490h1v1h-1zM301 490h1v1h-1zM338 490h1v1h-1zM376 490h1v1h-1zM414 490h1v1h-1zM451 490h1v1h-1zM489 490h1v1h-1zM527 490h1v1h-1zM565 490h1v1h-1zM602 490h1v1h-1zM640 490h1v1h-1zM678 490h1v1h-1zM715 490h1v1h-1zM753 490h1v1h-1zM791 490h1v1h-1zM829 490h1v1h-1zM866 490h1v1h-1zM904 490h1v1h-1zM942 490h1v1h-1zM979 490h1v1h-1zM1017 490h1v1h-1zM1055 490h1v1h-1zM1093 490h1v1h-1zM1130 490h1v1h-1zM1168 490h1v1h-1zM1206 490h1v1h-1zM1243 490h1v1h-1zM1281 490h1v1h-1zM1319 490h1v1h-1zM1357 490h1v1h-1zM1394 490h1v1h-1zM1432 490h1v1h-1zM1470 490h1v1h-1zM1507 490h1v1h-1zM1545 490h1v1h-1zM1583 490h1v1h-1zM1621 490h1v1h-1zM1658 490h1v1h-1zM1696 490h1v1h-1zM1734 490h1v1h-1zM1771 490h1v1h-1zM1809 490h1v1h-1zM1847 490h1v1h-1zM1885 490h1v1h-1zM1922 490h1v1h-1zM1960 490h1v1h-1zM1998 490h1v1h-1zM2035 490h1v1h-1zM2073 490h1v1h-1zM2111 490h1v1h-1zM2149 490h1v1h-1zM2186 490h1v1h-1zM2224 490h1v1h-1zM2262 490h1v1h-1zM74 702h1v1h-1zM112 702h1v1h-1zM150 702h1v1h-1zM187 702h1v1h-1zM225 702h1v1h-1zM263 702h1v1h-1zM301 702h1v1h-1zM338 702h1v1h-1zM376 702h1v1h-1zM414 702h1v1h-1zM451 702h1v1h-1zM489 702h1v1h-1zM527 702h1v1h-1zM565 702h1v1h-1zM602 702h1v1h-1zM640 702h1v1h-1zM678 702h1v1h-1zM715 702h1v1h-1zM753 702h1v1h-1zM791 702h1v1h-1zM829 702h1v1h-1zM866 702h1v1h-1zM904 702h1v1h-1zM942 702h1v1h-1zM979 702h1v1h-1zM1017 702h1v1h-1zM1055 702h1v1h-1zM1093 702h1v1h-1zM1130 702h1v1h-1zM1168 702h1v1h-1zM1206 702h1v1h-1zM1243 702h1v1h-1zM1281 702h1v1h-1zM1319 702h1v1h-1zM1357 702h1v1h-1zM1394 702h1v1h-1zM1432 702h1v1h-1zM1470 702h1v1h-1zM1507 702h1v1h-1zM1545 702h1v1h-1zM1583 702h1v1h-1zM1621 702h1v1h-1zM1658 702h1v1h-1zM1696 702h1v1h-1zM1734 702h1v1h-1zM1771 702h1v1h-1zM1809 702h1v1h-1zM1847 702h1v1h-1zM1885 702h1v1h-1zM1922 702h1v1h-1zM1960 702h1v1h-1zM1998 702h1v1h-1zM2035 702h1v1h-1zM2073 702h1v1h-1zM2111 702h1v1h-1zM2149 702h1v1h-1zM2186 702h1v1h-1zM2224 702h1v1h-1zM2262 702h1v1h-1zM74 808h1v1h-1zM112 808h1v1h-1zM150 808h1v1h-1zM187 808h1v1h-1zM225 808h1v1h-1zM263 808h1v1h-1zM301 808h1v1h-1zM338 808h1v1h-1zM376 808h1v1h-1zM414 808h1v1h-1zM451 808h1v1h-1zM489 808h1v1h-1zM527 808h1v1h-1zM565 808h1v1h-1zM602 808h1v1h-1zM640 808h1v1h-1zM678 808h1v1h-1zM715 808h1v1h-1zM753 808h1v1h-1zM791 808h1v1h-1zM829 808h1v1h-1zM866 808h1v1h-1zM904 808h1v1h-1zM942 808h1v1h-1zM979 808h1v1h-1zM1017 808h1v1h-1zM1055 808h1v1h-1zM1093 808h1v1h-1zM1130 808h1v1h-1zM1168 808h1v1h-1zM1206 808h1v1h-1zM1243 808h1v1h-1zM1281 808h1v1h-1zM1319 808h1v1h-1zM1357 808h1v1h-1zM1394 808h1v1h-1zM1432 808h1v1h-1zM1470 808h1v1h-1zM1507 808h1v1h-1zM1545 808h1v1h-1zM1583 808h1v1h-1zM1621 808h1v1h-1zM1658 808h1v1h-1zM1696 808h1v1h-1zM1734 808h1v1h-1zM1771 808h1v1h-1zM1809 808h1v1h-1zM1847 808h1v1h-1zM1885 808h1v1h-1zM1922 808h1v1h-1zM1960 808h1v1h-1zM1998 808h1v1h-1zM2035 808h1v1h-1zM2073 808h1v1h-1zM2111 808h1v1h-1zM2149 808h1v1h-1zM2186 808h1v1h-1zM2224 808h1v1h-1zM2262 808h1v1h-1zM74 914h1v1h-1zM112 914h1v1h-1zM150 914h1v1h-1zM187 914h1v1h-1zM225 914h1v1h-1zM263 914h1v1h-1zM301 914h1v1h-1zM338 914h1v1h-1zM376 914h1v1h-1zM414 914h1v1h-1zM451 914h1v1h-1zM489 914h1v1h-1zM527 914h1v1h-1zM565 914h1v1h-1zM602 914h1v1h-1zM640 914h1v1h-1zM678 914h1v1h-1zM715 914h1v1h-1zM753 914h1v1h-1zM791 914h1v1h-1zM829 914h1v1h-1zM866 914h1v1h-1zM904 914h1v1h-1zM942 914h1v1h-1zM979 914h1v1h-1zM1017 914h1v1h-1zM1055 914h1v1h-1zM1093 914h1v1h-1zM1130 914h1v1h-1zM1168 914h1v1h-1zM1206 914h1v1h-1zM1243 914h1v1h-1zM1281 914h1v1h-1zM1319 914h1v1h-1zM1357 914h1v1h-1zM1394 914h1v1h-1zM1432 914h1v1h-1zM1470 914h1v1h-1zM1507 914h1v1h-1zM1545 914h1v1h-1zM1583 914h1v1h-1zM1621 914h1v1h-1zM1658 914h1v1h-1zM1696 914h1v1h-1zM1734 914h1v1h-1zM1771 914h1v1h-1zM1809 914h1v1h-1zM1847 914h1v1h-1zM1885 914h1v1h-1zM1922 914h1v1h-1zM1960 914h1v1h-1zM1998 914h1v1h-1zM2035 914h1v1h-1zM2073 914h1v1h-1zM2111 914h1v1h-1zM2149 914h1v1h-1zM2186 914h1v1h-1zM2224 914h1v1h-1zM2262 914h1v1h-1zM225 193h1v1h-1zM225 214h1v1h-1zM225 236h1v1h-1zM225 257h1v1h-1zM225 278h1v1h-1zM225 299h1v1h-1zM225 320h1v1h-1zM225 342h1v1h-1zM225 363h1v1h-1zM225 384h1v1h-1zM225 405h1v1h-1zM225 426h1v1h-1zM225 448h1v1h-1zM225 469h1v1h-1zM225 490h1v1h-1zM225 511h1v1h-1zM225 532h1v1h-1zM225 554h1v1h-1zM225 575h1v1h-1zM225 596h1v1h-1zM225 617h1v1h-1zM225 638h1v1h-1zM225 660h1v1h-1zM225 681h1v1h-1zM225 702h1v1h-1zM225 723h1v1h-1zM225 744h1v1h-1zM225 766h1v1h-1zM225 787h1v1h-1zM225 808h1v1h-1zM225 829h1v1h-1zM225 850h1v1h-1zM225 872h1v1h-1zM225 893h1v1h-1zM225 914h1v1h-1zM225 935h1v1h-1zM225 956h1v1h-1zM225 978h1v1h-1zM225 999h1v1h-1zM414 193h1v1h-1zM414 214h1v1h-1zM414 236h1v1h-1zM414 257h1v1h-1zM414 278h1v1h-1zM414 299h1v1h-1zM414 320h1v1h-1zM414 342h1v1h-1zM414 363h1v1h-1zM414 384h1v1h-1zM414 405h1v1h-1zM414 426h1v1h-1zM414 448h1v1h-1zM414 469h1v1h-1zM414 490h1v1h-1zM414 511h1v1h-1zM414 532h1v1h-1zM414 554h1v1h-1zM414 575h1v1h-1zM414 596h1v1h-1zM414 617h1v1h-1zM414 638h1v1h-1zM414 660h1v1h-1zM414 681h1v1h-1zM414 702h1v1h-1zM414 723h1v1h-1zM414 744h1v1h-1zM414 766h1v1h-1zM414 787h1v1h-1zM414 808h1v1h-1zM414 829h1v1h-1zM414 850h1v1h-1zM414 872h1v1h-1zM414 893h1v1h-1zM414 914h1v1h-1zM414 935h1v1h-1zM414 956h1v1h-1zM414 978h1v1h-1zM414 999h1v1h-1zM602 193h1v1h-1zM602 214h1v1h-1zM602 236h1v1h-1zM602 257h1v1h-1zM602 278h1v1h-1zM602 299h1v1h-1zM602 320h1v1h-1zM602 342h1v1h-1zM602 363h1v1h-1zM602 384h1v1h-1zM602 405h1v1h-1zM602 426h1v1h-1zM602 448h1v1h-1zM602 469h1v1h-1zM602 490h1v1h-1zM602 511h1v1h-1zM602 532h1v1h-1zM602 554h1v1h-1zM602 575h1v1h-1zM602 596h1v1h-1zM602 617h1v1h-1zM602 638h1v1h-1zM602 660h1v1h-1zM602 681h1v1h-1zM602 702h1v1h-1zM602 723h1v1h-1zM602 744h1v1h-1zM602 766h1v1h-1zM602 787h1v1h-1zM602 808h1v1h-1zM602 829h1v1h-1zM602 850h1v1h-1zM602 872h1v1h-1zM602 893h1v1h-1zM602 914h1v1h-1zM602 935h1v1h-1zM602 956h1v1h-1zM602 978h1v1h-1zM602 999h1v1h-1zM791 193h1v1h-1zM791 214h1v1h-1zM791 236h1v1h-1zM791 257h1v1h-1zM791 278h1v1h-1zM791 299h1v1h-1zM791 320h1v1h-1zM791 342h1v1h-1zM791 363h1v1h-1zM791 384h1v1h-1zM791 405h1v1h-1zM791 426h1v1h-1zM791 448h1v1h-1zM791 469h1v1h-1zM791 490h1v1h-1zM791 511h1v1h-1zM791 532h1v1h-1zM791 554h1v1h-1zM791 575h1v1h-1zM791 596h1v1h-1zM791 617h1v1h-1zM791 638h1v1h-1zM791 660h1v1h-1zM791 681h1v1h-1zM791 702h1v1h-1zM791 723h1v1h-1zM791 744h1v1h-1zM791 766h1v1h-1zM791 787h1v1h-1zM791 808h1v1h-1zM791 829h1v1h-1zM791 850h1v1h-1zM791 872h1v1h-1zM791 893h1v1h-1zM791 914h1v1h-1zM791 935h1v1h-1zM791 956h1v1h-1zM791 978h1v1h-1zM791 999h1v1h-1zM979 193h1v1h-1zM979 214h1v1h-1zM979 236h1v1h-1zM979 257h1v1h-1zM979 278h1v1h-1zM979 299h1v1h-1zM979 320h1v1h-1zM979 342h1v1h-1zM979 363h1v1h-1zM979 384h1v1h-1zM979 405h1v1h-1zM979 426h1v1h-1zM979 448h1v1h-1zM979 469h1v1h-1zM979 490h1v1h-1zM979 511h1v1h-1zM979 532h1v1h-1zM979 554h1v1h-1zM979 575h1v1h-1zM979 596h1v1h-1zM979 617h1v1h-1zM979 638h1v1h-1zM979 660h1v1h-1zM979 681h1v1h-1zM979 702h1v1h-1zM979 723h1v1h-1zM979 744h1v1h-1zM979 766h1v1h-1zM979 787h1v1h-1zM979 808h1v1h-1zM979 829h1v1h-1zM979 850h1v1h-1zM979 872h1v1h-1zM979 893h1v1h-1zM979 914h1v1h-1zM979 935h1v1h-1zM979 956h1v1h-1zM979 978h1v1h-1zM979 999h1v1h-1zM1357 193h1v1h-1zM1357 214h1v1h-1zM1357 236h1v1h-1zM1357 257h1v1h-1zM1357 278h1v1h-1zM1357 299h1v1h-1zM1357 320h1v1h-1zM1357 342h1v1h-1zM1357 363h1v1h-1zM1357 384h1v1h-1zM1357 405h1v1h-1zM1357 426h1v1h-1zM1357 448h1v1h-1zM1357 469h1v1h-1zM1357 490h1v1h-1zM1357 511h1v1h-1zM1357 532h1v1h-1zM1357 554h1v1h-1zM1357 575h1v1h-1zM1357 596h1v1h-1zM1357 617h1v1h-1zM1357 638h1v1h-1zM1357 660h1v1h-1zM1357 681h1v1h-1zM1357 702h1v1h-1zM1357 723h1v1h-1zM1357 744h1v1h-1zM1357 766h1v1h-1zM1357 787h1v1h-1zM1357 808h1v1h-1zM1357 829h1v1h-1zM1357 850h1v1h-1zM1357 872h1v1h-1zM1357 893h1v1h-1zM1357 914h1v1h-1zM1357 935h1v1h-1zM1357 956h1v1h-1zM1357 978h1v1h-1zM1357 999h1v1h-1zM1545 193h1v1h-1zM1545 214h1v1h-1zM1545 236h1v1h-1zM1545 257h1v1h-1zM1545 278h1v1h-1zM1545 299h1v1h-1zM1545 320h1v1h-1zM1545 342h1v1h-1zM1545 363h1v1h-1zM1545 384h1v1h-1zM1545 405h1v1h-1zM1545 426h1v1h-1zM1545 448h1v1h-1zM1545 469h1v1h-1zM1545 490h1v1h-1zM1545 511h1v1h-1zM1545 532h1v1h-1zM1545 554h1v1h-1zM1545 575h1v1h-1zM1545 596h1v1h-1zM1545 617h1v1h-1zM1545 638h1v1h-1zM1545 660h1v1h-1zM1545 681h1v1h-1zM1545 702h1v1h-1zM1545 723h1v1h-1zM1545 744h1v1h-1zM1545 766h1v1h-1zM1545 787h1v1h-1zM1545 808h1v1h-1zM1545 829h1v1h-1zM1545 850h1v1h-1zM1545 872h1v1h-1zM1545 893h1v1h-1zM1545 914h1v1h-1zM1545 935h1v1h-1zM1545 956h1v1h-1zM1545 978h1v1h-1zM1545 999h1v1h-1zM1734 193h1v1h-1zM1734 214h1v1h-1zM1734 236h1v1h-1zM1734 257h1v1h-1zM1734 278h1v1h-1zM1734 299h1v1h-1zM1734 320h1v1h-1zM1734 342h1v1h-1zM1734 363h1v1h-1zM1734 384h1v1h-1zM1734 405h1v1h-1zM1734 426h1v1h-1zM1734 448h1v1h-1zM1734 469h1v1h-1zM1734 490h1v1h-1zM1734 511h1v1h-1zM1734 532h1v1h-1zM1734 554h1v1h-1zM1734 575h1v1h-1zM1734 596h1v1h-1zM1734 617h1v1h-1zM1734 638h1v1h-1zM1734 660h1v1h-1zM1734 681h1v1h-1zM1734 702h1v1h-1zM1734 723h1v1h-1zM1734 744h1v1h-1zM1734 766h1v1h-1zM1734 787h1v1h-1zM1734 808h1v1h-1zM1734 829h1v1h-1zM1734 850h1v1h-1zM1734 872h1v1h-1zM1734 893h1v1h-1zM1734 914h1v1h-1zM1734 935h1v1h-1zM1734 956h1v1h-1zM1734 978h1v1h-1zM1734 999h1v1h-1zM1922 193h1v1h-1zM1922 214h1v1h-1zM1922 236h1v1h-1zM1922 257h1v1h-1zM1922 278h1v1h-1zM1922 299h1v1h-1zM1922 320h1v1h-1zM1922 342h1v1h-1zM1922 363h1v1h-1zM1922 384h1v1h-1zM1922 405h1v1h-1zM1922 426h1v1h-1zM1922 448h1v1h-1zM1922 469h1v1h-1zM1922 490h1v1h-1zM1922 511h1v1h-1zM1922 532h1v1h-1zM1922 554h1v1h-1zM1922 575h1v1h-1zM1922 596h1v1h-1zM1922 617h1v1h-1zM1922 638h1v1h-1zM1922 660h1v1h-1zM1922 681h1v1h-1zM1922 702h1v1h-1zM1922 723h1v1h-1zM1922 744h1v1h-1zM1922 766h1v1h-1zM1922 787h1v1h-1zM1922 808h1v1h-1zM1922 829h1v1h-1zM1922 850h1v1h-1zM1922 872h1v1h-1zM1922 893h1v1h-1zM1922 914h1v1h-1zM1922 935h1v1h-1zM1922 956h1v1h-1zM1922 978h1v1h-1zM1922 999h1v1h-1zM2111 193h1v1h-1zM2111 214h1v1h-1zM2111 236h1v1h-1zM2111 257h1v1h-1zM2111 278h1v1h-1zM2111 299h1v1h-1zM2111 320h1v1h-1zM2111 342h1v1h-1zM2111 363h1v1h-1zM2111 384h1v1h-1zM2111 405h1v1h-1zM2111 426h1v1h-1zM2111 448h1v1h-1zM2111 469h1v1h-1zM2111 490h1v1h-1zM2111 511h1v1h-1zM2111 532h1v1h-1zM2111 554h1v1h-1zM2111 575h1v1h-1zM2111 596h1v1h-1zM2111 617h1v1h-1zM2111 638h1v1h-1zM2111 660h1v1h-1zM2111 681h1v1h-1zM2111 702h1v1h-1zM2111 723h1v1h-1zM2111 744h1v1h-1zM2111 766h1v1h-1zM2111 787h1v1h-1zM2111 808h1v1h-1zM2111 829h1v1h-1zM2111 850h1v1h-1zM2111 872h1v1h-1zM2111 893h1v1h-1zM2111 914h1v1h-1zM2111 935h1v1h-1zM2111 956h1v1h-1zM2111 978h1v1h-1zM2111 999h1v1h-1z" fill="#a8a8a8"/>
<path d="M38 596H2300v1H38zM1168 173h1V1021h-1zM74 592h1v9h-1zM74 173h1v4h-1zM74 1017h1v4h-1zM112 592h1v9h-1zM112 173h1v4h-1zM112 1017h1v4h-1zM150 592h1v9h-1zM150 173h1v4h-1zM150 1017h1v4h-1zM187 592h1v9h-1zM187 173h1v4h-1zM187 1017h1v4h-1zM225 592h1v9h-1zM225 173h1v7h-1zM225 1014h1v7h-1zM263 592h1v9h-1zM263 173h1v4h-1zM263 1017h1v4h-1zM301 592h1v9h-1zM301 173h1v4h-1zM301 1017h1v4h-1zM338 592h1v9h-1zM338 173h1v4h-1zM338 1017h1v4h-1zM376 592h1v9h-1zM376 173h1v4h-1zM376 1017h1v4h-1zM414 592h1v9h-1zM414 173h1v7h-1zM414 1014h1v7h-1zM451 592h1v9h-1zM451 173h1v4h-1zM451 1017h1v4h-1zM489 592h1v9h-1zM489 173h1v4h-1zM489 1017h1v4h-1zM527 592h1v9h-1zM527 173h1v4h-1zM527 1017h1v4h-1zM565 592h1v9h-1zM565 173h1v4h-1zM565 1017h1v4h-1zM602 592h1v9h-1zM602 173h1v7h-1zM602 1014h1v7h-1zM640 592h1v9h-1zM640 173h1v4h-1zM640 1017h1v4h-1zM678 592h1v9h-1zM678 173h1v4h-1zM678 1017h1v4h-1zM715 592h1v9h-1zM715 173h1v4h-1zM715 1017h1v4h-1zM753 592h1v9h-1zM753 173h1v4h-1zM753 1017h1v4h-1zM791 592h1v9h-1zM791 173h1v7h-1zM791 1014h1v7h-1zM829 592h1v9h-1zM829 173h1v4h-1zM829 1017h1v4h-1zM866 592h1v9h-1zM866 173h1v4h-1zM866 1017h1v4h-1zM904 592h1v9h-1zM904 173h1v4h-1zM904 1017h1v4h-1zM942 592h1v9h-1zM942 173h1v4h-1zM942 1017h1v4h-1zM979 592h1v9h-1zM979 173h1v7h-1zM979 1014h1v7h-1zM1017 592h1v9h-1zM1017 173h1v4h-1zM1017 1017h1v4h-1zM1055 592h1v9h-1zM1055 173h1v4h-1zM1055 1017h1v4h-1zM1093 592h1v9h-1zM1093 173h1v4h-1zM1093 1017h1v4h-1zM1130 592h1v9h-1zM1130 173h1v4h-1zM1130 1017h1v4h-1zM1168 592h1v9h-1zM1168 173h1v7h-1zM1168 1014h1v7h-1zM1206 592h1v9h-1zM1206 173h1v4h-1zM1206 1017h1v4h-1zM1243 592h1v9h-1zM1243 173h1v4h-1zM1243 1017h1v4h-1zM1281 592h1v9h-1zM1281 173h1v4h-1zM1281 1017h1v4h-1zM1319 592h1v9h-1zM1319 173h1v4h-1zM1319 1017h1v4h-1zM1357 592h1v9h-1zM1357 173h1v7h-1zM1357 1014h1v7h-1zM1394 592h1v9h-1zM1394 173h1v4h-1zM1394 1017h1v4h-1zM1432 592h1v9h-1zM1432 173h1v4h-1zM1432 1017h1v4h-1zM1470 592h1v9h-1zM1470 173h1v4h-1zM1470 1017h1v4h-1zM1507 592h1v9h-1zM1507 173h1v4h-1zM1507 1017h1v4h-1zM1545 592h1v9h-1zM1545 173h1v7h-1zM1545 1014h1v7h-1zM1583 592h1v9h-1zM1583 173h1v4h-1zM1583 1017h1v4h-1zM1621 592h1v9h-1zM1621 173h1v4h-1zM1621 1017h1v4h-1zM1658 592h1v9h-1zM1658 173h1v4h-1zM1658 1017h1v4h-1zM1696 592h1v9h-1zM1696 173h1v4h-1zM1696 1017h1v4h-1zM1734 592h1v9h-1zM1734 173h1v7h-1zM1734 1014h1v7h-1zM1771 592h1v9h-1zM1771 173h1v4h-1zM1771 1017h1v4h-1zM1809 592h1v9h-1zM1809 173h1v4h-1zM1809 1017h1v4h-1zM1847 592h1v9h-1zM1847 173h1v4h-1zM1847 1017h1v4h-1zM1885 592h1v9h-1zM1885 173h1v4h-1zM1885 1017h1v4h-1zM1922 592h1v9h-1zM1922 173h1v7h-1zM1922 1014h1v7h-1zM1960 592h1v9h-1zM1960 173h1v4h-1zM1960 1017h1v4h-1zM1998 592h1v9h-1zM1998 173h1v4h-1zM1998 1017h1v4h-1zM2035 592h1v9h-1zM2035 173h1v4h-1zM2035 1017h1v4h-1zM2073 592h1v9h-1zM2073 173h1v4h-1zM2073 1017h1v4h-1zM2111 592h1v9h-1zM2111 173h1v7h-1zM2111 1014h1v7h-1zM2149 592h1v9h-1zM2149 173h1v4h-1zM2149 1017h1v4h-1zM2186 592h1v9h-1zM2186 173h1v4h-1zM2186 1017h1v4h-1zM2224 592h1v9h-1zM2224 173h1v4h-1zM2224 1017h1v4h-1zM2262 592h1v9h-1zM2262 173h1v4h-1zM2262 1017h1v4h-1zM1164 193h9v1h-9zM38 193h4v1h-4zM2296 193h4v1h-4zM1164 214h9v1h-9zM38 214h4v1h-4zM2296 214h4v1h-4zM1164 236h9v1h-9zM38 236h4v1h-4zM2296 236h4v1h-4zM1164 257h9v1h-9zM38 257h4v1h-4zM2296 257h4v1h-4zM1164 278h9v1h-9zM38 278h7v1h-7zM2293 278h7v1h-7zM1164 299h9v1h-9zM38 299h4v1h-4zM2296 299h4v1h-4zM1164 320h9v1h-9zM38 320h4v1h-4zM2296 320h4v1h-4zM1164 342h9v1h-9zM38 342h4v1h-4zM2296 342h4v1h-4zM1164 363h9v1h-9zM38 363h4v1h-4zM2296 363h4v1h-4zM1164 384h9v1h-9zM38 384h7v1h-7zM2293 384h7v1h-7zM1164 405h9v1h-9zM38 405h4v1h-4zM2296 405h4v1h-4zM1164 426h9v1h-9zM38 426h4v1h-4zM2296 426h4v1h-4zM1164 448h9v1h-9zM38 448h4v1h-4zM2296 448h4v1h-4zM1164 469h9v1h-9zM38 469h4v1h-4zM2296 469h4v1h-4zM1164 490h9v1h-9zM38 490h7v1h-7zM2293 490h7v1h-7zM1164 511h9v1h-9zM38 511h4v1h-4zM2296 511h4v1h-4zM1164 532h9v1h-9zM38 532h4v1h-4zM2296 532h4v1h-4zM1164 554h9v1h-9zM38 554h4v1h-4zM2296 554h4v1h-4zM1164 575h9v1h-9zM38 575h4v1h-4zM2296 575h4v1h-4zM1164 596h9v1h-9zM38 596h7v1h-7zM2293 596h7v1h-7zM1164 617h9v1h-9zM38 617h4v1h-4zM2296 617h4v1h-4zM1164 638h9v1h-9zM38 638h4v1h-4zM2296 638h4v1h-4zM1164 660h9v1h-9zM38 660h4v1h-4zM2296 660h4v1h-4zM1164 681h9v1h-9zM38 681h4v1h-4zM2296 681h4v1h-4zM1164 702h9v1h-9zM38 702h7v1h-7zM2293 702h7v1h-7zM1164 723h9v1h-9zM38 723h4v1h-4zM2296 723h4v1h-4zM1164 744h9v1h-9zM38 744h4v1h-4zM2296 744h4v1h-4zM1164 766h9v1h-9zM38 766h4v1h-4zM2296 766h4v1h-4zM1164 787h9v1h-9zM38 787h4v1h-4zM2296 787h4v1h-4zM1164 808h9v1h-9zM38 808h7v1h-7zM2293 808h7v1h-7zM1164 829h9v1h-9zM38 829h4v1h-4zM2296 829h4v1h-4zM1164 850h9v1h-9zM38 850h4v1h-4zM2296 850h4v1h-4zM1164 872h9v1h-9zM38 872h4v1h-4zM2296 872h4v1h-4zM1164 893h9v1h-9zM38 893h4v1h-4zM2296 893h4v1h-4zM1164 914h9v1h-9zM38 914h7v1h-7zM2293 914h7v1h-7zM1164 935h9v1h-9zM38 935h4v1h-4zM2296 935h4v1h-4zM1164 956h9v1h-9zM38 956h4v1h-4zM2296 956h4v1h-4zM1164 978h9v1h-9zM38 978h4v1h-4zM2296 978h4v1h-4zM1164 999h9v1h-9zM38 999h4v1h-4zM2296 999h4v1h-4z" fill="#c8c8c8"/>
<path d="M36 171H2302V1023H36z M38 173V1021H2300V173z" fill="#e6e6e6" fill-rule="evenodd"/>
</svg>
<svg class="a" style="left:0;top:0" width="2560" height="1080">
<path d="M37 468L38 468L39 468L40 468L41 468L42 468L43 468L45 465L47 468L55 468L56 468L57 468L59 465L61 468L63 468L65 465L70 465L72 468L73 468L74 468L75 468L76 468L77 468L79 465L81 468L83 468L84 468L85 468L86 468L87 468L88 468L90 465L92 468L100 468L102 475L104 468L105 468L107 465L109 468L110 468L111 468L112 468L113 468L114 468L115 468L116 468L117 468L118 468L119 468L120 468L121 468L122 468L123 468L124 468L125 468L126 468L127 468L129 465L131 468L134 468L135 468L136 468L137 468L138 468L140 465L142 468L145 468L146 468L147 468L148 468L149 468L150 468L152 465L154 468L155 468L156 468L157 468L158 468L159 468L160 468L161 468L162 468L163 468L164 468L165 468L166 468L168 465L173 465L175 468L176 468L177 468L178 468L179 468L180 468L181 468L182 468L183 468L184 468L185 468L186 468L187 468L188 468L189 468L190 468L191 468L192 468L193 468L194 468L195 468L197 465L199 468L202 468L203 468L204 468L205 468L206 468L207 468L208 468L209 468L210 468L211 468L212 468L213 468L214 468L215 468L216 468L217 468L218 468L219 468L220 468L221 468L222 468L222 575L224 575L225 568L226 568L227 568L228 568L229 568L230 568L232 575L234 568L235 568L236 568L237 568L238 568L239 568L240 568L241 568L242 568L243 568L244 568L245 568L246 568L247 568L248 568L249 568L250 568L251 568L252 568L253 568L254 568L255 568L256 568L257 568L258 568L259 568L260 568L261 568L262 568L263 568L264 568L265 568L266 568L267 568L268 568L269 568L270 568L271 568L272 568L273 568L274 568L275 568L276 568L277 568L278 568L279 568L280 568L282 575L284 568L285 568L286 568L287 568L288 568L289 568L290 568L291 568L292 568L293 568L294 568L295 568L296 568L297 568L298 568L299 568L300 568L301 568L302 568L303 568L304 568L305 568L306 568L307 568L308 568L309 568L310 568L311 568L312 568L313 568L314 568L315 568L316 568L317 568L318 568L319 568L320 568L321 568L322 568L323 568L324 568L325 568L326 568L327 568L328 568L329 568L330 568L331 568L332 568L333 568L334 568L335 568L336 568L337 568L338 568L339 568L340 568L341 568L342 568L343 568L344 568L345 568L346 568L347 568L348 568L349 568L350 568L351 568L352 568L353 568L354 568L355 568L356 568L357 568L358 568L359 568L360 568L361 568L362 568L363 568L364 568L365 568L366 568L367 568L368 568L369 568L370 568L371 568L372 568L373 568L374 568L375 568L376 568L377 568L378 568L379 568L380 568L381 568L382 568L383 568L384 568L385 568L386 568L387 568L388 568L389 568L390 568L391 568L392 568L393 568L394 568L395 568L396 568L397 568L398 568L399 568L400 568L402 575L404 568L405 568L406 568L407 568L408 568L409 568L411 575L413 568L414 568L415 568L416 568L417 568L419 575L421 568L422 568L423 568L424 568L425 568L426 568L427 568L428 568L430 575L432 568L433 568L434 568L435 568L436 568L437 568L438 568L439 568L440 568L441 568L442 568L443 568L445 575L447 568L448 568L449 568L450 568L451 568L452 568L453 568L455 575L457 568L458 568L459 568L460 568L461 568L462 568L464 575L466 568L467 568L468 568L469 568L470 568L471 568L472 568L473 568L474 568L475 568L476 568L477 568L478 568L479 568L480 568L481 568L482 568L483 568L484 568L485 568L486 568L487 568L489 575L491 568L492 568L493 568L494 568L495 568L496 568L497 568L498 568L499 568L500 568L501 568L502 568L503 568L504 568L505 568L506 568L507 568L508 568L509 568L510 568L511 568L512 568L513 568L514 568L515 568L516 568L517 568L518 568L519 568L520 568L521 568L522 568L523 568L524 568L525 568L526 568L527 568L528 568L529 568L530 568L531 568L532 568L533 568L534 568L535 568L536 568L537 568L539 575L541 568L542 568L543 568L544 568L545 568L546 568L547 568L548 568L549 568L550 568L551 568L552 568L553 568L554 568L555 568L556 568L557 568L558 568L559 568L560 568L561 568L562 568L563 568L564 568L565 568L566 568L568 575L570 568L571 568L572 568L573 568L575 575L577 568L578 568L579 568L580 568L581 568L582 568L583 568L584 568L585 568L586 568L587 568L588 568L589 568L590 568L591 568L592 568L593 568L594 568L595 568L596 568L597 568L598 568L599 568L600 568L601 568L602 568L603 568L604 568L605 568L606 568L607 568L608 568L609 568L610 568L611 568L613 575L615 568L616 568L617 568L618 568L619 568L620 568L622 575L624 568L625 568L626 568L627 568L628 568L629 568L630 568L631 568L632 568L633 568L634 568L635 568L636 568L637 568L638 568L639 568L640 568L641 568L642 568L643 568L644 568L645 568L646 568L647 568L648 568L649 568L650 568L651 568L652 568L653 568L654 568L655 568L656 568L657 568L658 568L658 468L659 468L661 465L666 465L668 468L669 468L670 468L671 468L672 468L674 465L676 468L677 468L678 468L679 468L680 468L682 465L684 468L685 468L686 468L687 468L688 468L690 465L695 465L697 468L698 468L699 468L700 468L701 468L702 468L703 468L704 468L706 465L708 468L710 468L711 468L712 468L713 468L714 468L715 468L716 468L717 468L719 465L721 468L729 468L730 468L731 468L732 468L733 468L734 468L735 468L736 468L738 465L740 468L741 468L742 468L743 468L744 468L746 465L748 468L751 468L752 468L753 468L754 468L755 468L757 465L759 468L767 468L769 465L771 468L773 468L774 468L775 468L776 468L778 465L780 468L788 468L789 468L790 468L791 468L792 468L793 468L794 468L795 468L796 468L797 468L798 468L799 468L801 465L803 468L805 468L806 468L807 468L808 468L810 465L812 468L815 468L816 468L817 468L818 468L819 468L820 468L821 468L822 468L823 468L824 468L825 468L827 465L832 465L834 468L835 468L836 468L838 465L840 468L843 468L844 468L845 468L847 475L849 468L850 468L852 465L854 468L856 468L857 468L858 468L859 468L860 468L861 468L862 468L863 468L864 468L865 468L866 468L867 468L869 465L871 468L874 468L875 468L876 468L878 465L880 468L883 468L884 468L885 468L886 468L887 468L888 468L889 468L890 468L891 468L892 468L893 468L894 468L895 468L897 475L899 468L900 468L902 465L904 468L906 468L907 468L908 468L909 468L911 465L913 468L914 468L916 465L918 468L919 468L920 468L921 468L922 468L923 468L924 468L926 465L928 468L936 468L938 475L940 468L941 468L942 468L943 468L944 468L945 468L946 468L947 468L948 468L949 468L950 468L951 468L952 468L953 468L954 468L955 468L956 468L957 468L958 468L959 468L961 465L963 468L965 468L966 468L967 468L968 468L970 465L975 465L977 468L978 468L979 468L980 468L981 468L982 468L983 468L984 468L985 468L986 468L987 468L988 468L989 468L990 468L991 468L991 575L993 575L994 568L995 568L996 568L997 568L998 568L999 568L1001 575L1003 568L1004 568L1005 568L1006 568L1007 568L1008 568L1009 568L1010 568L1011 568L1012 568L1013 568L1014 568L1015 568L1016 568L1017 568L1018 568L1019 568L1020 568L1021 568L1022 568L1023 568L1024 568L1025 568L1027 575L1029 568L1030 568L1031 568L1032 568L1033 568L1034 568L1035 568L1036 568L1037 568L1038 568L1039 568L1040 568L1041 568L1042 568L1044 575L1046 568L1047 568L1048 568L1049 568L1050 568L1051 568L1052 568L1054 575L1056 568L1057 568L1058 568L1059 568L1060 568L1061 568L1062 568L1063 568L1064 568L1065 568L1066 568L1067 568L1068 568L1069 568L1070 568L1071 568L1072 568L1073 568L1074 568L1075 568L1076 568L1077 568L1078 568L1079 568L1080 568L1081 568L1082 568L1083 568L1084 568L1085 568L1086 568L1087 568L1088 568L1089 568L1090 568L1091 568L1092 568L1093 568L1094 568L1095 568L1096 568L1097 568L1098 568L1099 568L1100 568L1102 575L1104 568L1105 568L1106 568L1107 568L1108 568L1109 568L1110 568L1111 568L1112 568L1113 568L1114 568L1115 568L1116 568L1117 568L1118 568L1119 568L1120 568L1121 568L1122 568L1123 568L1124 568L1125 568L1126 568L1127 568L1128 568L1129 568L1130 568L1131 568L1132 568L1133 568L1134 568L1135 568L1136 568L1137 568L1138 568L1139 568L1140 568L1141 568L1143 575L1145 568L1146 568L1147 568L1148 568L1149 568L1150 568L1151 568L1152 568L1153 568L1154 568L1155 568L1156 568L1157 568L1158 568L1159 568L1160 568L1161 568L1162 568L1163 568L1164 568L1165 568L1166 568L1167 568L1168 568L1169 568L1170 568L1171 568L1172 568L1173 568L1174 568L1175 568L1176 568L1177 568L1178 568L1179 568L1180 568L1181 568L1182 568L1183 568L1184 568L1185 568L1186 568L1187 568L1188 568L1189 568L1190 568L1191 568L1192 568L1193 568L1194 568L1195 568L1196 568L1197 568L1198 568L1199 568L1200 568L1201 568L1202 568L1203 568L1204 568L1205 568L1206 568L1207 568L1208 568L1209 568L1210 568L1211 568L1212 568L1213 568L1214 568L1215 568L1216 568L1217 568L1218 568L1219 568L1220 568L1221 568L1222 568L1223 568L1224 568L1225 568L1226 568L1227 568L1228 568L1229 568L1230 568L1231 568L1232 568L1233 568L1234 568L1235 568L1236 568L1238 575L1240 568L1241 568L1242 568L1243 568L1245 575L1247 568L1248 568L1249 568L1250 568L1251 568L1252 568L1253 568L1254 568L1255 568L1256 568L1257 568L1258 568L1259 568L1260 568L1261 568L1262 568L1263 568L1264 568L1265 568L1266 568L1267 568L1268 568L1269 568L1270 568L1272 575L1274 568L1275 568L1277 575L1279 568L1280 568L1281 568L1282 568L1283 568L1284 568L1285 568L1286 568L1287 568L1288 568L1289 568L1290 568L1291 568L1292 568L1293 568L1294 568L1295 568L1296 568L1297 568L1298 568L1299 568L1300 568L1301 568L1302 568L1303 568L1304 568L1305 568L1306 568L1307 568L1308 568L1310 575L1312 568L1313 568L1314 568L1315 568L1316 568L1317 568L1318 568L1319 568L1320 568L1322 575L1324 568L1325 568L1326 568L1327 568L1328 568L1329 568L1330 568L1331 568L1332 568L1333 568L1334 568L1335 568L1336 568L1337 568L1338 568L1339 568L1340 568L1341 568L1342 568L1343 568L1344 568L1345 568L1346 568L1347 568L1348 568L1349 568L1350 568L1351 568L1353 575L1355 568L1356 568L1357 568L1358 568L1359 568L1360 568L1361 568L1362 568L1363 568L1365 575L1367 568L1368 568L1369 568L1370 568L1372 575L1374 568L1375 568L1376 568L1377 568L1378 568L1379 568L1380 568L1381 568L1382 568L1383 568L1384 568L1385 568L1386 568L1387 568L1388 568L1389 568L1390 568L1391 568L1392 568L1393 568L1394 568L1395 568L1396 568L1397 568L1398 568L1399 568L1400 568L1401 568L1402 568L1403 568L1404 568L1405 568L1406 568L1407 568L1408 568L1409 568L1410 568L1411 568L1412 568L1413 568L1414 568L1415 568L1416 568L1417 568L1418 568L1419 568L1420 568L1421 568L1422 568L1423 568L1424 568L1425 568L1426 568L1427 568L1428 568L1428 468L1429 468L1430 468L1431 468L1432 468L1433 468L1434 468L1435 468L1436 468L1437 468L1438 468L1439 468L1441 465L1443 468L1446 468L1447 468L1449 465L1451 468L1452 468L1453 468L1454 468L1455 468L1456 468L1458 465L1460 468L1468 468L1470 465L1475 465L1477 468L1478 468L1479 468L1480 468L1481 468L1482 468L1483 468L1485 465L1490 465L1492 468L1493 468L1495 465L1497 468L1498 468L1500 465L1502 468L1510 468L1511 468L1512 468L1513 468L1514 468L1515 468L1516 468L1517 468L1518 468L1519 468L1520 468L1521 468L1522 468L1523 468L1524 468L1525 468L1526 468L1527 468L1528 468L1529 468L1530 468L1531 468L1532 468L1533 468L1534 468L1535 468L1536 468L1537 468L1538 468L1539 468L1540 468L1541 468L1542 468L1543 468L1545 465L1547 468L1555 468L1556 468L1557 468L1558 468L1559 468L1560 468L1561 468L1562 468L1563 468L1564 468L1565 468L1567 465L1572 465L1574 468L1575 468L1576 468L1577 468L1578 468L1579 468L1580 468L1581 468L1582 468L1584 465L1589 465L1591 468L1592 468L1593 468L1594 468L1596 465L1601 465L1603 468L1604 468L1605 468L1606 468L1607 468L1609 465L1611 468L1619 468L1620 468L1621 468L1622 468L1624 465L1626 468L1629 468L1630 468L1631 468L1632 468L1633 468L1634 468L1635 468L1637 465L1639 468L1640 468L1641 468L1642 468L1643 468L1644 468L1645 468L1647 465L1652 465L1654 468L1655 468L1656 468L1657 468L1659 465L1661 468L1664 468L1665 468L1666 468L1667 468L1668 468L1670 465L1672 468L1680 468L1682 465L1687 465L1689 468L1690 468L1691 468L1693 465L1698 465L1700 468L1701 468L1702 468L1704 465L1706 468L1714 468L1715 468L1716 468L1717 468L1718 468L1719 468L1720 468L1721 468L1722 468L1723 468L1724 468L1725 468L1726 468L1727 468L1728 468L1729 468L1731 465L1733 468L1741 468L1742 468L1743 468L1744 468L1745 468L1746 468L1747 468L1748 468L1749 468L1750 468L1751 468L1752 468L1753 468L1754 468L1755 468L1756 468L1757 468L1758 468L1759 468L1760 468L1761 468L1762 468L1763 468L1763 575L1765 575L1766 568L1767 568L1768 568L1769 568L1770 568L1771 568L1772 568L1773 568L1774 568L1775 568L1776 568L1777 568L1778 568L1779 568L1780 568L1781 568L1782 568L1783 568L1784 568L1785 568L1786 568L1787 568L1788 568L1789 568L1790 568L1792 575L1794 568L1795 568L1796 568L1797 568L1798 568L1799 568L1800 568L1801 568L1802 568L1803 568L1804 568L1805 568L1806 568L1807 568L1808 568L1809 568L1810 568L1811 568L1813 575L1815 568L1816 568L1817 568L1818 568L1819 568L1820 568L1821 568L1822 568L1823 568L1824 568L1825 568L1826 568L1827 568L1828 568L1829 568L1831 575L1833 568L1834 568L1835 568L1836 568L1837 568L1838 568L1839 568L1840 568L1841 568L1843 575L1845 568L1846 568L1847 568L1848 568L1849 568L1850 568L1851 568L1852 568L1853 568L1854 568L1855 568L1856 568L1857 568L1858 568L1859 568L1860 568L1861 568L1862 568L1863 568L1864 568L1865 568L1866 568L1867 568L1868 568L1869 568L1870 568L1871 568L1872 568L1873 568L1875 575L1877 568L1878 568L1879 568L1880 568L1881 568L1882 568L1883 568L1884 568L1885 568L1886 568L1887 568L1888 568L1889 568L1890 568L1891 568L1892 568L1893 568L1894 568L1895 568L1896 568L1897 568L1898 568L1899 568L1900 568L1901 568L1902 568L1903 568L1904 568L1905 568L1906 568L1907 568L1909 575L1911 568L1912 568L1913 568L1914 568L1915 568L1916 568L1917 568L1918 568L1919 568L1920 568L1921 568L1922 568L1923 568L1924 568L1925 568L1926 568L1927 568L1928 568L1929 568L1930 568L1931 568L1932 568L1933 568L1934 568L1935 568L1936 568L1937 568L1938 568L1939 568L1940 568L1941 568L1942 568L1943 568L1944 568L1945 568L1946 568L1947 568L1948 568L1949 568L1950 568L1951 568L1952 568L1953 568L1954 568L1955 568L1956 568L1957 568L1958 568L1959 568L1960 568L1961 568L1962 568L1963 568L1964 568L1965 568L1966 568L1967 568L1968 568L1969 568L1970 568L1971 568L1972 568L1973 568L1974 568L1975 568L1976 568L1977 568L1978 568L1979 568L1981 575L1983 568L1984 568L1985 568L1986 568L1987 568L1988 568L1989 568L1990 568L1991 568L1992 568L1993 568L1994 568L1995 568L1996 568L1997 568L1999 575L2001 568L2002 568L2003 568L2004 568L2005 568L2006 568L2007 568L2008 568L2009 568L2010 568L2011 568L2012 568L2013 568L2014 568L2015 568L2016 568L2017 568L2018 568L2019 568L2020 568L2021 568L2022 568L2023 568L2024 568L2025 568L2026 568L2027 568L2028 568L2029 568L2030 568L2031 568L2032 568L2033 568L2034 568L2035 568L2037 575L2039 568L2040 568L2041 568L2042 568L2043 568L2044 568L2045 568L2046 568L2047 568L2048 568L2049 568L2050 568L2051 568L2052 568L2053 568L2054 568L2055 568L2056 568L2057 568L2058 568L2059 568L2060 568L2062 575L2064 568L2065 568L2066 568L2067 568L2068 568L2069 568L2071 575L2073 568L2074 568L2075 568L2076 568L2077 568L2078 568L2079 568L2080 568L2081 568L2082 568L2083 568L2084 568L2085 568L2086 568L2087 568L2088 568L2089 568L2090 568L2091 568L2092 568L2093 568L2094 568L2096 575L2098 568L2099 568L2100 568L2101 568L2102 568L2103 568L2104 568L2105 568L2106 568L2107 568L2108 568L2109 568L2110 568L2111 568L2112 568L2113 568L2114 568L2115 568L2116 568L2117 568L2118 568L2120 575L2122 568L2123 568L2124 568L2125 568L2126 568L2127 568L2128 568L2129 568L2130 568L2131 568L2132 568L2133 568L2134 568L2135 568L2136 568L2137 568L2139 575L2141 568L2142 568L2143 568L2144 568L2145 568L2146 568L2147 568L2148 568L2150 575L2152 568L2153 568L2154 568L2156 575L2158 568L2159 568L2160 568L2161 568L2162 568L2163 568L2164 568L2165 568L2166 568L2168 575L2170 568L2171 568L2172 568L2173 568L2174 568L2175 568L2176 568L2177 568L2178 568L2179 568L2180 568L2181 568L2182 568L2183 568L2184 568L2185 568L2186 568L2187 568L2188 568L2189 568L2190 568L2191 568L2192 568L2193 568L2194 568L2195 568L2196 568L2197 568L2198 568L2198 468L2199 468L2200 468L2201 468L2202 468L2203 468L2204 468L2205 468L2206 468L2207 468L2208 468L2210 465L2212 468L2214 468L2215 468L2216 468L2217 468L2219 465L2221 468L2224 468L2226 465L2228 468L2230 468L2232 465L2237 465L2239 468L2240 468L2242 465L2244 468L2246 468L2247 468L2248 468L2249 468L2251 465L2253 468L2254 468L2255 468L2256 468L2257 468L2258 468L2259 468L2260 468L2261 468L2262 468L2263 468L2265 465L2267 468L2269 468L2270 468L2272 465L2274 468L2277 468L2279 465L2281 468L2283 468L2284 468L2285 468L2286 468L2287 468L2288 468L2289 468L2290 468L2292 465L2297 465L2299 468L2300 468" fill="none" stroke="#ffff00" stroke-width="1" shape-rendering="crispEdges"/>
<path d="M37 512L37 512L39 507L41 512L41 512L43 512L43 512L45 515L47 512L47 512L49 509L51 512L51 512L53 508L55 512L55 512L57 512L57 512L59 515L61 512L61 512L63 515L65 512L65 512L67 508L69 512L69 512L71 515L73 512L73 512L76 512L76 512L78 508L80 512L80 512L82 507L84 512L84 512L86 512L86 512L87 512L88 512L89 524L92 573L93 581L94 585L94 585L98 585L98 585L100 578L101 592L103 580L105 585L105 585L109 585L109 585L111 578L112 592L114 580L116 585L116 585L118 592L120 585L120 585L122 585L122 585L123 585L123 585L125 579L128 585L128 585L130 580L133 580L134 585L134 585L136 578L137 592L139 580L141 585L141 585L142.6 585L143 585L144 575L149 520L150 508L150 512L152 508L156 508L158 512L158 512L160 515L162 512L162 512L164 508L168 508L170 512L170 512L172 515L174 512L174 512L177 512L177 512L178 512L178 512L181 512L181 512L183 515L185 512L185 512L187 508L190 512L190 512L192 504L194 512L194 512L196 507L199 512L199 512L201 509L204 512L204 512L205 512L205 512L206 512L206 512L207 512L208 512L209 524L212 573L213 581L214 585L214 585L216 578L217 592L219 580L221 585L221 585L222 585L222 585L224 592L226 585L226 585L228 578L229 592L231 580L233 585L233 585L235 578L238 578L239 585L239 585L241 592L243 585L243 585L246 585L246 585L248 592L250 585L250 585L253 585L253 585L255 578L257 585L257 585L261 585L261 585L263.2 585L264 585L265 575L270 520L271 508L271 512L273 507L275 512L275 512L277 509L279 512L279 512L281 508L284 512L284 512L286 515L288 512L288 512L291 512L291 512L293 507L295 512L295 512L297 508L301 508L303 512L303 512L305 508L311 508L313 512L313 512L315 507L318 512L318 512L320 508L322 512L322 512L324 515L326 512L326 512L328 512L328 512L329.5 512L331 512L332 524L335 573L336 581L337 585L337 585L339 592L341 585L341 585L343 578L346 585L346 585L348 592L350 585L350 585L351 585L351 585L354 585L354 585L356 578L357 592L359 580L361 585L361 585L363 578L366 578L367 585L367 585L369 578L371 585L371 585L373 578L374 592L376 580L378 585L378 585L381 585L381 585L383.5 585L384 585L385 575L390 520L391 508L391 512L393 508L395 512L395 512L397 507L399 512L399 512L401 509L403 512L403 512L405 515L407 512L407 512L409 507L412 512L412 512L414 515L416 512L416 512L418 508L420 512L420 512L422 509L424 512L424 512L426 508L428 512L428 512L430 508L432 508L434 512L434 512L436 507L438 512L438 512L440 507L442 512L442 512L444 515L446 512L446 512L448 515L450 512L450 512L451.5 512L453 512L454 524L457 573L458 581L459 585L459 585L461 592L463 585L463 585L465 578L466 592L468 580L470 585L470 585L472 580L475 580L476 585L476 585L478 579L481 585L481 585L483 580L486 585L486 585L488 592L490 585L490 585L492 585L492 585L494 578L497 585L497 585L499 592L501 585L501 585L502 585L502 585L503.8 585L504 585L505 575L510 520L511 508L511 512L513 508L515 512L515 512L517 509L519 512L519 512L521 515L523 512L523 512L525 508L527 512L527 512L529 508L531 508L533 512L533 512L535 515L537 512L537 512L539 508L543 508L545 512L545 512L547 507L549 512L549 512L551 508L554 512L554 512L556 508L558 512L558 512L560 508L562 508L564 512L564 512L566 508L569 512L569 512L570 512L570 512L572 515L574 512L574 512L576 512L578 512L579 524L581 573L582 581L583 585L583 585L585 579L588 585L588 585L590 580L593 580L594 585L594 585L596 578L599 585L599 585L601 585L601 585L603 578L605 585L605 585L607 592L609 585L609 585L611 578L614 578L615 585L615 585L617 592L619 585L619 585L621 592L623 585L623 585L624 585L624 585L625.2 585L626 585L627 575L632 520L633 508L633 512L635 515L637 512L637 512L639 507L641 512L641 512L643 508L645 508L647 512L647 512L649 515L651 512L651 512L653 504L655 512L655 512L657 508L659 512L659 512L661 509L664 512L664 512L666 515L668 512L668 512L670 508L673 512L673 512L675 507L678 512L678 512L680 508L686 508L688 512L688 512L690 508L692 512L692 512L694 508L697 512L697 512L698 512L698 512L699 512L700 512L701 524L704 573L705 581L706 585L706 585L709 585L709 585L712 585L712 585L714 578L717 578L718 585L718 585L722 585L722 585L724 578L725 592L727 580L729 585L729 585L731 578L732 592L734 580L736 585L736 585L738 592L740 585L740 585L742 578L745 578L746 585L746 585L748 585L748 585L749 585L749 585L750 575L755 520L756 508L756 512L758 508L764 508L766 512L766 512L768 508L771 512L771 512L773 512L773 512L774 512L774 512L776 509L778 512L778 512L780 512L780 512L782 515L784 512L784 512L785 512L785 512L788 512L788 512L790 508L796 508L798 512L798 512L800 508L802 512L802 512L804 515L806 512L806 512L807 512L807 512L808 512L808 512L811 512L811 512L813 507L816 512L816 512L818 512L818 512L819 512L820 512L821 524L824 573L825 581L826 585L826 585L828 592L830 585L830 585L832 579L835 579L836 585L836 585L840 585L840 585L842 585L842 585L844 592L846 585L846 585L848 592L850 585L850 585L852 592L854 585L854 585L858 585L858 585L860 579L863 585L863 585L865 580L868 585L868 585L872 585L872 585L873 585L874 585L875 575L879 520L880 508L880 512L882 508L884 512L884 512L886 515L888 512L888 512L890 507L892 512L892 512L894 515L896 512L896 512L899 512L899 512L902 512L902 512L903 512L903 512L905 509L908 512L908 512L909 512L909 512L911 508L914 512L914 512L916 509L918 512L918 512L920 512L920 512L922 504L924 512L924 512L926 509L928 512L928 512L929 512L929 512L931 512L931 512L932 512L932 512L934 515L936 512L936 512L937 512L937 512L939.8 512L941 512L942 524L945 573L946 581L947 585L947 585L949 578L951 585L951 585L953 578L955 585L955 585L957 578L960 578L961 585L961 585L964 585L964 585L966 578L968 585L968 585L970 578L972 585L972 585L974 578L977 585L977 585L979 578L982 585L982 585L984 578L987 585L987 585L989 592L991 585L991 585L993 592L995 585L995 585L996.6 585L997 585L998 575L1003 520L1004 508L1004 512L1006 508L1009 512L1009 512L1010 512L1010 512L1012 515L1014 512L1014 512L1016 508L1019 512L1019 512L1021 508L1027 508L1029 512L1029 512L1031 509L1034 512L1034 512L1036 508L1039 512L1039 512L1041 512L1041 512L1043 515L1045 512L1045 512L1047 508L1049 508L1051 512L1051 512L1053 515L1055 512L1055 512L1057 515L1059 512L1059 512L1061 512L1061 512L1062 512L1063 512L1064 524L1067 573L1068 581L1069 585L1069 585L1071 578L1072 592L1074 580L1076 585L1076 585L1078 578L1079 592L1081 580L1083 585L1083 585L1085 578L1086 592L1088 580L1090 585L1090 585L1092 580L1095 585L1095 585L1097 579L1100 579L1101 585L1101 585L1105 585L1105 585L1107 592L1109 585L1109 585L1113 585L1113 585L1115 585L1115 585L1116 585L1116 585L1117 585L1118 585L1119 575L1123 520L1124 508L1124 512L1126 507L1129 512L1129 512L1131 508L1133 512L1133 512L1135 508L1139 508L1141 512L1141 512L1143 507L1146 512L1146 512L1148 512L1148 512L1150 515L1152 512L1152 512L1154 512L1154 512L1156 508L1158 508L1160 512L1160 512L1162 508L1164 512L1164 512L1166 515L1168 512L1168 512L1169 512L1169 512L1171 509L1173 512L1173 512L1175 515L1177 512L1177 512L1179 508L1181 512L1181 512L1182 512L1182 512L1183 512L1183 512L1184 512L1184 512L1185.5 512L1187 512L1188 524L1191 573L1192 581L1193 585L1193 585L1195 578L1196 592L1198 580L1200 585L1200 585L1202 580L1205 585L1205 585L1209 585L1209 585L1211 578L1214 578L1215 585L1215 585L1217 578L1218 592L1220 580L1222 585L1222 585L1225 585L1225 585L1229 585L1229 585L1231 578L1233 585L1233 585L1235 585L1235 585L1236 585L1236 585L1237 575L1243 520L1244 508L1244 512L1246 508L1248 512L1248 512L1251 512L1251 512L1252 512L1252 512L1254 515L1256 512L1256 512L1257 512L1257 512L1259 508L1261 512L1261 512L1263 508L1265 512L1265 512L1267 508L1269 508L1271 512L1271 512L1273 512L1273 512L1275 508L1278 512L1278 512L1280 508L1282 512L1282 512L1284 512L1284 512L1285 512L1285 512L1286 512L1286 512L1288 508L1290 508L1292 512L1292 512L1294 508L1296 508L1298 512L1298 512L1300 512L1300 512L1302 508L1304 512L1304 512L1306 512L1306 512L1308.8 512L1310 512L1311 524L1314 573L1315 581L1316 585L1316 585L1318 585L1318 585L1320 578L1321 592L1323 580L1325 585L1325 585L1327 580L1330 585L1330 585L1332 578L1333 592L1335 580L1337 585L1337 585L1339 592L1341 585L1341 585L1343 578L1345 585L1345 585L1347 580L1350 585L1350 585L1352 592L1354 585L1354 585L1356 585L1356 585L1358 585L1358 585L1359 575L1365 520L1366 508L1366 512L1368 508L1371 512L1371 512L1374 512L1374 512L1376 508L1378 512L1378 512L1380 508L1383 512L1383 512L1385 515L1387 512L1387 512L1389 509L1391 512L1391 512L1393 508L1395 508L1397 512L1397 512L1399 512L1399 512L1401 508L1405 508L1407 512L1407 512L1409 508L1411 512L1411 512L1413 509L1416 512L1416 512L1418 508L1420 512L1420 512L1422 508L1425 512L1425 512L1427 507L1429 512L1429 512L1430.7 512L1432 512L1433 524L1436 573L1437 581L1438 585L1438 585L1440 578L1443 578L1444 585L1444 585L1446 578L1449 585L1449 585L1451 592L1453 585L1453 585L1455 592L1457 585L1457 585L1459 578L1462 585L1462 585L1464 580L1466 585L1466 585L1467 585L1467 585L1469 578L1472 578L1473 585L1473 585L1475 578L1478 578L1479 585L1479 585L1481 585L1482 585L1483 575L1487 520L1488 508L1488 512L1490 515L1492 512L1492 512L1493 512L1493 512L1495 512L1495 512L1497 507L1500 512L1500 512L1501 512L1501 512L1503 508L1506 512L1506 512L1507 512L1507 512L1508 512L1508 512L1510 508L1516 508L1518 512L1518 512L1520 508L1523 512L1523 512L1526 512L1526 512L1528 508L1531 512L1531 512L1533 509L1536 512L1536 512L1538 507L1541 512L1541 512L1543 509L1545 512L1545 512L1546 512L1546 512L1548 509L1550 512L1550 512L1551.5 512L1553 512L1554 524L1557 573L1558 581L1559 585L1559 585L1561 578L1562 592L1564 580L1566 585L1566 585L1568 578L1570 585L1570 585L1571 585L1571 585L1573 592L1575 585L1575 585L1578 585L1578 585L1579 585L1579 585L1581 578L1584 585L1584 585L1586 578L1589 585L1589 585L1591 592L1593 585L1593 585L1595 585L1595 585L1597 579L1599 585L1599 585L1601 585L1601 585L1602 585L1602 585L1604.6 585L1605 585L1606 575L1611 520L1612 508L1612 512L1613 512L1613 512L1616 512L1616 512L1618 508L1621 512L1621 512L1623 508L1629 508L1631 512L1631 512L1633 508L1635 512L1635 512L1636 512L1636 512L1638 508L1641 512L1641 512L1643 508L1646 512L1646 512L1649 512L1649 512L1651 515L1653 512L1653 512L1655 515L1657 512L1657 512L1660 512L1660 512L1662 508L1665 512L1665 512L1667 509L1670 512L1670 512L1673 512L1674 512L1675 524L1679 573L1680 581L1681 585L1681 585L1683 578L1686 585L1686 585L1688 580L1690 585L1690 585L1692 578L1693 592L1695 580L1697 585L1697 585L1700 585L1700 585L1702 592L1704 585L1704 585L1706 578L1707 592L1709 580L1711 585L1711 585L1713 592L1715 585L1715 585L1717 578L1720 585L1720 585L1722 580L1725 585L1725 585L1727 585L1727 585L1728.8 585L1729 585L1730 575L1735 520L1736 508L1736 512L1738 504L1740 512L1740 512L1743 512L1743 512L1745 515L1747 512L1747 512L1750 512L1750 512L1752 512L1752 512L1755 512L1755 512L1757 512L1757 512L1759 512L1759 512L1761 508L1767 508L1769 512L1769 512L1771 512L1771 512L1772 512L1772 512L1774 508L1776 512L1776 512L1778 504L1780 512L1780 512L1782 509L1784 512L1784 512L1786 507L1788 512L1788 512L1789 512L1789 512L1792 512L1792 512L1793 512L1794 512L1795 524L1799 573L1800 581L1801 585L1801 585L1803 578L1806 585L1806 585L1810 585L1810 585L1812 580L1814 585L1814 585L1816 578L1817 592L1819 580L1821 585L1821 585L1823 578L1824 592L1826 580L1828 585L1828 585L1831 585L1831 585L1835 585L1835 585L1837 580L1840 585L1840 585L1842 592L1844 585L1844 585L1846 592L1848 585L1848 585L1850 585L1850 585L1851 575L1857 520L1858 508L1858 512L1860 507L1863 512L1863 512L1865 512L1865 512L1868 512L1868 512L1870 508L1872 512L1872 512L1874 508L1876 508L1878 512L1878 512L1879 512L1879 512L1881 507L1884 512L1884 512L1886 512L1886 512L1887 512L1887 512L1889 508L1891 508L1893 512L1893 512L1895 507L1898 512L1898 512L1901 512L1901 512L1903 515L1905 512L1905 512L1907 507L1910 512L1910 512L1912 509L1915 512L1915 512L1917 512L1917 512L1918 512L1919 512L1920 524L1923 573L1924 581L1925 585L1925 585L1927 579L1930 579L1931 585L1931 585L1933 585L1933 585L1937 585L1937 585L1939 592L1941 585L1941 585L1943 585L1943 585L1945 578L1947 585L1947 585L1949 578L1952 578L1953 585L1953 585L1957 585L1957 585L1959 592L1961 585L1961 585L1963 578L1964 592L1966 580L1968 585L1968 585L1970.6 585L1971 585L1972 575L1977 520L1978 508L1978 512L1980 507L1982 512L1982 512L1984 508L1986 512L1986 512L1988 509L1991 512L1991 512L1993 508L1997 508L1999 512L1999 512L2001 508L2007 508L2009 512L2009 512L2011 508L2014 512L2014 512L2016 508L2020 508L2022 512L2022 512L2024 508L2026 508L2028 512L2028 512L2031 512L2031 512L2033 515L2035 512L2035 512L2037 509L2039 512L2039 512L2040.5 512L2042 512L2043 524L2046 573L2047 581L2048 585L2048 585L2050 578L2051 592L2053 580L2055 585L2055 585L2057 578L2060 585L2060 585L2062 580L2065 580L2066 585L2066 585L2070 585L2070 585L2072 579L2075 585L2075 585L2077 578L2078 592L2080 580L2082 585L2082 585L2086 585L2086 585L2088 592L2090 585L2090 585L2091 585L2091 585L2092 585L2092 585L2093 575L2098 520L2099 508L2099 512L2101 515L2103 512L2103 512L2105 515L2107 512L2107 512L2109 507L2112 512L2112 512L2114 509L2116 512L2116 512L2118 508L2120 512L2120 512L2122 504L2124 512L2124 512L2126 508L2128 512L2128 512L2131 512L2131 512L2133 509L2136 512L2136 512L2138 508L2142 508L2144 512L2144 512L2146 515L2148 512L2148 512L2150 509L2152 512L2152 512L2153 512L2153 512L2155 509L2157 512L2157 512L2159 515L2161 512L2161 512L2162 512L2162 512L2163 512L2163 512L2164 512L2164 512L2165 512L2166 512L2167 524L2170 573L2171 581L2172 585L2172 585L2174 585L2174 585L2176 579L2178 585L2178 585L2180 592L2182 585L2182 585L2184 579L2187 585L2187 585L2190 585L2190 585L2192 579L2194 585L2194 585L2196 578L2199 585L2199 585L2200 585L2200 585L2201 585L2201 585L2203 585L2203 585L2205 585L2205 585L2207 580L2210 580L2211 585L2211 585L2212.8 585L2213 585L2214 575L2219 520L2220 508L2220 512L2222 508L2228 508L2230 512L2230 512L2232 509L2235 512L2235 512L2237 508L2243 508L2245 512L2245 512L2247 509L2249 512L2249 512L2250 512L2250 512L2252 512L2252 512L2255 512L2255 512L2257 507L2259 512L2259 512L2261 508L2263 512L2263 512L2265 509L2267 512L2267 512L2269 515L2271 512L2271 512L2273 508L2275 512L2275 512L2277 512L2277 512L2280 512L2280 512L2283 512L2283 512L2284 512L2286 512L2287 524L2289 573L2290 581L2291 585L2291 585L2293 592L2295 585L2295 585L2297 592L2299 585L2299 585" fill="none" stroke="#00ffff" stroke-width="1" shape-rendering="crispEdges"/>
</svg>

<!-- scope top strip -->
<div class="a" style="left:18px;top:129px;width:50px;height:21px;background:#000"></div>
<div class="t" style="left:26px;top:133px;font-size:13px;color:#00ff00">Trig'D</div>
<svg class="a" style="left:398px;top:129px" width="34" height="22" shape-rendering="crispEdges">
<path d="M2.5 18.5L4.5 17.5L6.5 18.5L8.5 17.5L10.5 18.5V2.5L12.5 3.5L14.5 2.5L16.5 3.5L18.5 2.5V18.5L20.5 17.5L22.5 18.5L24.5 17.5L26.5 18.5L28.5 17.5L30.5 18.5" fill="none" stroke="#80ff80" stroke-width="1"/>
</svg>
<div class="a" style="left:1101px;top:128px;width:134px;height:23px;background:#000"></div>
<svg class="a" style="left:1101px;top:128px" width="134" height="23">
<path d="M4 7.5H2.5V20.5H4 M130 7.5H131.5V20.5H130" fill="none" stroke="#00ffff" stroke-width="1.6"/>
<path d="M3 14.5L7 12.5L12 16.5L17 12.5L22 16.5L27 12.5L32 16.5L37 12.5L42 16.5L47 12.5L52 16.5L57 12.5L62 16.5L67 12.5L72 16.5L77 12.5L82 16.5L87 12.5L92 16.5L97 12.5L102 16.5L107 12.5L112 16.5L117 12.5L122 16.5L127 12.5L132 16.5" fill="none" stroke="#00ff00" stroke-width="1.4"/>
<path d="M65 2.8H70.5M67.8 2.8V8" fill="none" stroke="#ff8000" stroke-width="1.2"/>
</svg>
<div class="a" style="left:2219px;top:129px;width:100px;height:21px;background:#000"></div>
<svg class="a" style="left:2219px;top:129px" width="20" height="21">
<path d="M4 18.5H10.5V2.5H15" fill="none" stroke="#ffff00" stroke-width="1.3"/>
<path d="M6.5 11.5L10.5 7.5L14.5 11.5z" fill="#ffff00"/>
</svg>
<div class="a" style="left:2238px;top:133px;width:27px;height:15px;background:#ffff00"></div>
<div class="t" style="left:2239px;top:134px;font-size:13px;color:#000">CH1</div>
<div class="t" style="left:2269.5px;top:134px;font-size:13px;color:#ffff00;transform:scaleX(0.95);transform-origin:0 0">-62.7mV</div>
<div class="a" style="left:16px;top:153px;width:2305px;height:2px;background:#fff"></div>
<svg class="a" style="left:1162px;top:155px" width="14" height="17">
<path d="M1 1H12V11L6.5 16.5L1 11z" fill="#ff8000"/>
<path d="M3.5 3.5H10.5M7.5 3.5V11" fill="none" stroke="#000" stroke-width="1.1"/>
</svg>
<!-- left / right markers -->
<svg class="a" style="left:17px;top:588px" width="20" height="13">
<path d="M1 1H13L18.5 6.5L13 12H1z" fill="#00ffff"/>
<text x="6" y="10.8" font-family="Liberation Sans" font-weight="bold" font-size="11" fill="#000">2</text>
</svg>
<svg class="a" style="left:2302px;top:592px" width="20" height="13">
<path d="M19 1H7L1.5 6.5L7 12H19z" fill="#ffff00"/>
<path d="M9.5 3.5H16M12.8 3.5V11" fill="none" stroke="#000" stroke-width="1.4"/>
</svg>
<!-- bottom strip -->
<div class="a" style="left:37px;top:1026px;width:92px;height:19px;background:#000"></div>
<div class="a" style="left:38px;top:1028px;width:27px;height:15px;background:#ffff00"></div>
<div class="t" style="left:39px;top:1029px;font-size:13px;color:#000">CH1</div>
<svg class="a" style="left:66px;top:1032px" width="12" height="8" shape-rendering="crispEdges"><path d="M1 2h2v1h-2zM4 2h2v1h-2zM7 2h2v1h-2zM1 5h10v1h-10z" fill="#ffff00"/></svg>
<div class="t" style="left:86px;top:1029px;font-size:13px;color:#ffff00;transform:scaleX(0.91);transform-origin:0 0">5.00V</div>
<div class="a" style="left:147px;top:1026px;width:92px;height:19px;background:#000"></div>
<div class="t" style="left:149px;top:1029px;font-size:13px;color:#00ffff">CH2</div>
<svg class="a" style="left:177px;top:1032px" width="12" height="8" shape-rendering="crispEdges"><path d="M1 2h2v1h-2zM4 2h2v1h-2zM7 2h2v1h-2zM1 5h10v1h-10z" fill="#00ffff"/></svg>
<div class="t" style="left:196px;top:1029px;font-size:13px;color:#00ffff;transform:scaleX(0.91);transform-origin:0 0">5.00V</div>
<div class="a" style="left:2210px;top:1026px;width:90px;height:19px;background:#000"></div>
<div class="t" style="left:2212px;top:1029px;font-size:13px;color:#ff8000;transform:scaleX(0.96);transform-origin:0 0">Time: 500.0us</div>
<!-- measurements -->
<div class="t" style="left:263px;top:875px;font-size:20px;transform:scaleX(0.95);transform-origin:0 0;color:#ffff00">CH1:Vmin = 941mV</div>
<div class="t" style="left:263px;top:905px;font-size:20px;transform:scaleX(0.95);transform-origin:0 0;color:#ffff00">CH1:Vmax = 6.27V</div>
<div class="t" style="left:263px;top:935px;font-size:20px;transform:scaleX(0.95);transform-origin:0 0;color:#ffff00">CH1:Freq = 490.2Hz</div>
<div class="t" style="left:1394px;top:875px;font-size:20px;transform:scaleX(0.95);transform-origin:0 0;color:#00ffff">CH2:Vmin = 0.00uV</div>
<div class="t" style="left:1394px;top:905px;font-size:20px;transform:scaleX(0.95);transform-origin:0 0;color:#00ffff">CH2:Vmax = 4.55V</div>
<div class="t" style="left:1394px;top:935px;font-size:20px;transform:scaleX(0.95);transform-origin:0 0;color:#00ffff">CH2:Freq = 3.125KHz</div>
</body></html>
